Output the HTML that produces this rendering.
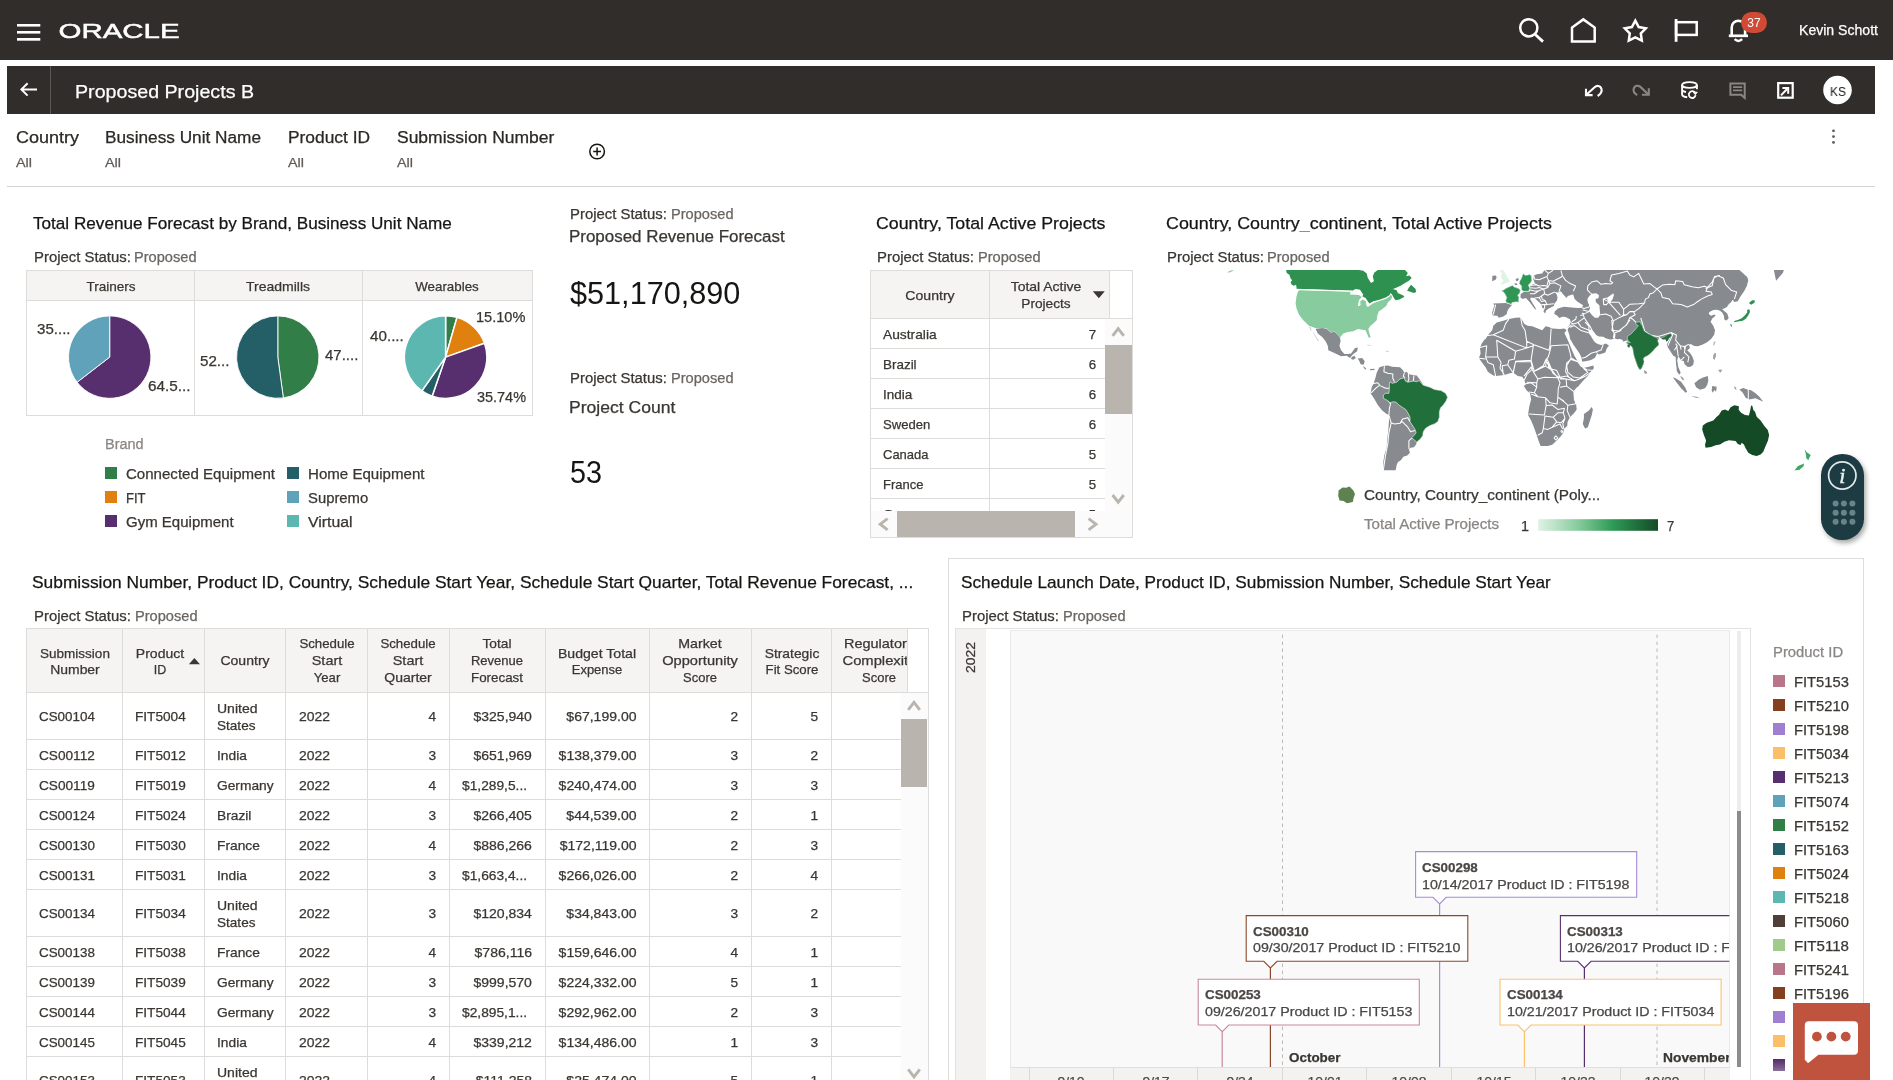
<!DOCTYPE html>
<html lang="en"><head><meta charset="utf-8"><title>Proposed Projects B</title>
<style>
html,body{margin:0;padding:0;background:#fff;}
body{width:1893px;height:1080px;overflow:hidden;position:relative;font-family:"Liberation Sans",sans-serif;}
.t{position:absolute;white-space:nowrap;-webkit-text-stroke:0.25px;}
#w{position:absolute;left:0;top:0;width:1893px;height:1080px;will-change:transform;}
.b{position:absolute;box-sizing:border-box;}
svg{position:absolute;left:0;top:0;overflow:visible;}
</style></head><body><div id="w">
<div class="b" style="left:0px;top:0px;width:1893px;height:59.5px;background:#312d2a;"></div>
<div class="b" style="left:7px;top:66px;width:1868px;height:47.7px;background:#312d2a;"></div>
<div class="b" style="left:50px;top:66px;width:1px;height:47.7px;background:#5b5754;"></div>
<svg width="1893" height="120" viewBox="0 0 1893 120" fill="none" stroke="#fff" stroke-width="2.5"><g stroke="none" fill="#fff"><rect x="17" y="24" width="23.3" height="2.6"/><rect x="17" y="31" width="23.3" height="2.6"/><rect x="17" y="38" width="23.3" height="2.7"/></g><text x="58.6" y="38" font-family="Liberation Sans, sans-serif" font-size="21" fill="#fff" stroke="#fff" stroke-width="0.5" textLength="121" lengthAdjust="spacingAndGlyphs">ORACLE</text><circle cx="1528.8" cy="27.8" r="8.6"/><path d="M1535 34.2 L1543 41.6" stroke-width="2.8"/><path d="M1572 41.6 V27.6 L1583.3 19.4 L1594.7 27.6 V41.6 Z" stroke-linejoin="miter"/><polygon points="1635.30,20.60 1638.71,27.01 1645.86,28.27 1640.82,33.49 1641.82,40.68 1635.30,37.50 1628.78,40.68 1629.78,33.49 1624.74,28.27 1631.89,27.01" stroke-linejoin="miter"/><path d="M1676.1 19 V41.8" stroke-width="2.8"/><rect x="1676.1" y="22.2" width="20.6" height="12.7"/><path d="M1728.8 35.8 H1748" stroke-width="2.7"/><path d="M1731.7 35.6 V27.4 a6.7 6.7 0 0 1 13.4 0 V35.6" stroke-width="2.6"/><path d="M1734.6 39.2 q3.8 3.4 7.6 0" stroke-width="2.4"/><rect x="1741" y="12" width="26" height="21" rx="10.5" fill="#d04a35" stroke="none"/><text x="1754" y="26.8" font-family="Liberation Sans, sans-serif" font-size="12" fill="#fff" stroke="none" text-anchor="middle">37</text><path d="M21.5 89.4 H37 M27.6 83.2 L21.4 89.4 L27.6 95.6" stroke-width="2"/><g stroke-width="2.1"><path d="M1586 88.8 V95.1 H1592.6"/><path d="M1586.3 94.8 L1594.6 87.2 C1597 85 1600.4 85.6 1601.4 88.6 C1602.2 91.4 1600.6 94.2 1597.6 96"/></g><g stroke-width="2.1" stroke="#8a8683"><path d="M1648.8 88.2 V94.8 H1642"/><path d="M1648.5 94.5 L1640.4 86.9 C1638 84.8 1634.8 85.6 1633.8 88.4 C1633 91 1634.4 93.6 1637.2 95"/></g><g stroke-width="1.9"><ellipse cx="1689.5" cy="85" rx="7.4" ry="2.9"/><path d="M1682.1 85 V94.6 C1682.1 96 1684.5 97 1687.2 97.3 M1696.9 85 V89.2 M1682.1 90 C1682.4 91 1684 91.7 1686 92"/><path d="M1695.6 95.2 a3.4 3.4 0 1 1 -0.6 -2.6" stroke-width="1.8"/><path d="M1693.2 92.2 h4.2 l-2.1 2.6 z" fill="#fff" stroke-width="0.8"/></g><g stroke="#8a8683" stroke-width="2"><path d="M1730.4 83.4 H1744.7 V98 L1741.2 94.7 H1730.4 Z" stroke-linejoin="miter"/><path d="M1733 87.2 H1742.2 M1733 90.4 H1742.2" stroke-width="1.8"/></g><g stroke-width="2.2"><rect x="1778.2" y="83.1" width="14.5" height="14.6"/><path d="M1781 95.4 L1787.3 88.8" stroke-width="2"/><path d="M1782.4 87.9 H1788.2 V93.8" fill="none" stroke-width="2"/></g><circle cx="1837.5" cy="90" r="14.3" fill="#fff" stroke="none"/></svg>
<div class="t" style="top:21.00px;font-size:14px;line-height:19px;color:#fff;left:1799.20px;transform-origin:0 0;transform:scaleX(1.0051);">Kevin Schott</div>
<div class="t" style="top:79.00px;font-size:19px;line-height:25px;color:#fff;left:75.40px;transform-origin:0 0;transform:scaleX(1.0335);">Proposed Projects B</div>
<div class="t" style="top:83.00px;font-size:13px;line-height:17px;color:#161513;left:1537.60px;width:600px;text-align:center;transform-origin:50% 0;transform:scaleX(0.9226);-webkit-text-stroke:0;">KS</div>
<div class="t" style="top:127.00px;font-size:16px;line-height:21px;color:#2b2825;left:15.70px;transform-origin:0 0;transform:scaleX(1.1246);">Country</div>
<div class="t" style="top:127.00px;font-size:16px;line-height:21px;color:#2b2825;left:105.10px;transform-origin:0 0;transform:scaleX(1.0763);">Business Unit Name</div>
<div class="t" style="top:127.00px;font-size:16px;line-height:21px;color:#2b2825;left:287.70px;transform-origin:0 0;transform:scaleX(1.0849);">Product ID</div>
<div class="t" style="top:127.00px;font-size:16px;line-height:21px;color:#2b2825;left:396.50px;transform-origin:0 0;transform:scaleX(1.0920);">Submission Number</div>
<div class="t" style="top:154.00px;font-size:13.7px;line-height:18px;color:#5f5a56;left:15.70px;transform-origin:0 0;transform:scaleX(1.0508);">All</div>
<div class="t" style="top:154.00px;font-size:13.7px;line-height:18px;color:#5f5a56;left:105.10px;transform-origin:0 0;transform:scaleX(1.0508);">All</div>
<div class="t" style="top:154.00px;font-size:13.7px;line-height:18px;color:#5f5a56;left:287.70px;transform-origin:0 0;transform:scaleX(1.0508);">All</div>
<div class="t" style="top:154.00px;font-size:13.7px;line-height:18px;color:#5f5a56;left:396.50px;transform-origin:0 0;transform:scaleX(1.0508);">All</div>
<svg width="1893" height="200" viewBox="0 0 1893 200" fill="none" stroke="#161513" stroke-width="1.5"><circle cx="597.1" cy="151.5" r="7.3"/><path d="M593.2 151.5 H601 M597.1 147.6 V155.4"/><g fill="#5f5a56" stroke="none"><circle cx="1833.5" cy="130.8" r="1.4"/><circle cx="1833.5" cy="136.6" r="1.4"/><circle cx="1833.5" cy="142.4" r="1.4"/></g></svg>
<div class="b" style="left:7px;top:186px;width:1868px;height:1px;background:#d6d2cf;"></div>
<div class="t" style="top:213.00px;font-size:16.6px;line-height:22px;color:#161513;left:33.30px;transform-origin:0 0;transform:scaleX(1.0322);clip-path:inset(0 0 3.4px 0);">Total Revenue Forecast by Brand, Business Unit Name</div>
<div class="t" style="top:248.00px;font-size:14px;line-height:19px;color:#3a3632;left:33.80px;transform-origin:0 0;transform:scaleX(1.0633);">Project Status:</div>
<div class="t" style="top:248.00px;font-size:14px;line-height:19px;color:#6b6661;left:134.10px;transform-origin:0 0;transform:scaleX(1.0429);">Proposed</div>
<div class="b" style="left:26px;top:270px;width:507px;height:146px;border:1px solid #dddcda;background:#fff;"></div>
<div class="b" style="left:27px;top:271px;width:505px;height:29.5px;background:#f5f4f2;"></div>
<div class="b" style="left:27px;top:300px;width:505px;height:1px;background:#dddcda;"></div>
<div class="b" style="left:194px;top:271px;width:1px;height:144px;background:#dddcda;"></div>
<div class="b" style="left:362px;top:271px;width:1px;height:144px;background:#dddcda;"></div>
<div class="t" style="top:278.00px;font-size:13px;line-height:17px;color:#3a3632;left:-189.40px;width:600px;text-align:center;transform-origin:50% 0;transform:scaleX(1.0425);">Trainers</div>
<div class="t" style="top:278.00px;font-size:13px;line-height:17px;color:#3a3632;left:-21.70px;width:600px;text-align:center;transform-origin:50% 0;transform:scaleX(1.0762);">Treadmills</div>
<div class="t" style="top:278.00px;font-size:13px;line-height:17px;color:#3a3632;left:146.60px;width:600px;text-align:center;transform-origin:50% 0;transform:scaleX(1.0259);">Wearables</div>
<svg width="1893" height="1080" viewBox="0 0 1893 1080" stroke="#fff" stroke-width="0.9" stroke-linejoin="round"><path d="M109.70 357.10 L109.70 315.90 A41.2 41.2 0 1 1 77.07 382.25 Z" fill="#582f6e"/><path d="M109.70 357.10 L77.07 382.25 A41.2 41.2 0 0 1 109.70 315.90 Z" fill="#5fa2ba"/><path d="M277.80 357.10 L277.80 315.90 A41.2 41.2 0 0 1 283.35 397.92 Z" fill="#317e49"/><path d="M277.80 357.10 L283.35 397.92 A41.2 41.2 0 1 1 277.80 315.90 Z" fill="#245e66"/><g stroke-width="1.5"><path d="M445.60 357.10 L445.60 315.80 A41.3 41.3 0 0 1 457.00 317.40 Z" fill="#317e49"/><path d="M445.60 357.10 L457.00 317.40 A41.3 41.3 0 0 1 484.50 343.23 Z" fill="#e0810f"/><path d="M445.60 357.10 L484.50 343.23 A41.3 41.3 0 0 1 432.12 396.14 Z" fill="#582f6e"/><path d="M445.60 357.10 L432.12 396.14 A41.3 41.3 0 0 1 421.87 390.90 Z" fill="#245e66"/><path d="M445.60 357.10 L421.87 390.90 A41.3 41.3 0 0 1 445.60 315.80 Z" fill="#5db7b1"/></g></svg>
<div class="t" style="top:320.00px;font-size:14px;line-height:19px;color:#3a3632;left:36.70px;transform-origin:0 0;transform:scaleX(1.0762);">35....</div>
<div class="t" style="top:377.00px;font-size:14px;line-height:19px;color:#3a3632;left:148.40px;transform-origin:0 0;transform:scaleX(1.0922);">64.5...</div>
<div class="t" style="top:352.00px;font-size:14px;line-height:19px;color:#3a3632;left:200.20px;transform-origin:0 0;transform:scaleX(1.0830);">52...</div>
<div class="t" style="top:346.00px;font-size:14px;line-height:19px;color:#3a3632;left:324.60px;transform-origin:0 0;transform:scaleX(1.0698);">47....</div>
<div class="t" style="top:327.00px;font-size:14px;line-height:19px;color:#3a3632;left:369.70px;transform-origin:0 0;transform:scaleX(1.0858);">40....</div>
<div class="t" style="top:308.00px;font-size:14px;line-height:19px;color:#3a3632;left:475.60px;transform-origin:0 0;transform:scaleX(1.0404);">15.10%</div>
<div class="t" style="top:388.00px;font-size:14px;line-height:19px;color:#3a3632;left:476.60px;transform-origin:0 0;transform:scaleX(1.0320);">35.74%</div>
<div class="t" style="top:435.00px;font-size:14px;line-height:19px;color:#8a8683;left:105.20px;transform-origin:0 0;transform:scaleX(1.0333);">Brand</div>
<div class="b" style="left:105.2px;top:467.2px;width:11.8px;height:11.8px;background:#317e49;"></div>
<div class="t" style="top:465.00px;font-size:14px;line-height:19px;color:#3a3632;left:125.60px;transform-origin:0 0;transform:scaleX(1.0756);">Connected Equipment</div>
<div class="b" style="left:105.2px;top:491.2px;width:11.8px;height:11.8px;background:#e0810f;"></div>
<div class="t" style="top:489.00px;font-size:14px;line-height:19px;color:#3a3632;left:125.60px;transform-origin:0 0;transform:scaleX(0.9337);">FIT</div>
<div class="b" style="left:105.2px;top:515.2px;width:11.8px;height:11.8px;background:#582f6e;"></div>
<div class="t" style="top:513.00px;font-size:14px;line-height:19px;color:#3a3632;left:125.60px;transform-origin:0 0;transform:scaleX(1.0721);">Gym Equipment</div>
<div class="b" style="left:287px;top:467.2px;width:11.8px;height:11.8px;background:#245e66;"></div>
<div class="t" style="top:465.00px;font-size:14px;line-height:19px;color:#3a3632;left:307.80px;transform-origin:0 0;transform:scaleX(1.0771);">Home Equipment</div>
<div class="b" style="left:287px;top:491.2px;width:11.8px;height:11.8px;background:#5fa2ba;"></div>
<div class="t" style="top:489.00px;font-size:14px;line-height:19px;color:#3a3632;left:307.80px;transform-origin:0 0;transform:scaleX(1.0598);">Supremo</div>
<div class="b" style="left:287px;top:515.2px;width:11.8px;height:11.8px;background:#5db7b1;"></div>
<div class="t" style="top:513.00px;font-size:14px;line-height:19px;color:#3a3632;left:307.80px;transform-origin:0 0;transform:scaleX(1.1312);">Virtual</div>
<div class="t" style="top:205.00px;font-size:14px;line-height:19px;color:#3a3632;left:570.30px;transform-origin:0 0;transform:scaleX(1.0633);">Project Status:</div>
<div class="t" style="top:205.00px;font-size:14px;line-height:19px;color:#6b6661;left:670.60px;transform-origin:0 0;transform:scaleX(1.0429);">Proposed</div>
<div class="t" style="top:226.00px;font-size:16px;line-height:21px;color:#3a3632;left:569.30px;transform-origin:0 0;transform:scaleX(1.0586);">Proposed Revenue Forecast</div>
<div class="t" style="top:273.00px;font-size:30.6px;line-height:40px;color:#161513;left:570.30px;transform-origin:0 0;transform:scaleX(1.0015);-webkit-text-stroke:0;">$51,170,890</div>
<div class="t" style="top:369.00px;font-size:14px;line-height:19px;color:#3a3632;left:570.30px;transform-origin:0 0;transform:scaleX(1.0633);">Project Status:</div>
<div class="t" style="top:369.00px;font-size:14px;line-height:19px;color:#6b6661;left:670.60px;transform-origin:0 0;transform:scaleX(1.0429);">Proposed</div>
<div class="t" style="top:397.00px;font-size:16px;line-height:21px;color:#3a3632;left:569.30px;transform-origin:0 0;transform:scaleX(1.0966);">Project Count</div>
<div class="t" style="top:452.00px;font-size:30.6px;line-height:40px;color:#161513;left:570.30px;transform-origin:0 0;transform:scaleX(0.9403);-webkit-text-stroke:0;">53</div>
<div class="t" style="top:213.00px;font-size:16.6px;line-height:22px;color:#161513;left:876.40px;transform-origin:0 0;transform:scaleX(1.0707);clip-path:inset(0 0 3.4px 0);">Country, Total Active Projects</div>
<div class="t" style="top:248.00px;font-size:14px;line-height:19px;color:#3a3632;left:877.30px;transform-origin:0 0;transform:scaleX(1.0633);">Project Status:</div>
<div class="t" style="top:248.00px;font-size:14px;line-height:19px;color:#6b6661;left:977.60px;transform-origin:0 0;transform:scaleX(1.0429);">Proposed</div>
<div class="b" style="left:870px;top:270px;width:263px;height:268px;border:1px solid #dddcda;background:#fff;"></div>
<div class="b" style="left:871px;top:271px;width:238.5px;height:47.5px;background:#f5f4f2;"></div>
<div class="b" style="left:871px;top:318px;width:261px;height:1px;background:#dddcda;"></div>
<div class="b" style="left:989px;top:271px;width:1px;height:241px;background:#dddcda;"></div>
<div class="b" style="left:1109px;top:271px;width:1px;height:47px;background:#dddcda;"></div>
<div class="b" style="left:1105px;top:319px;width:27px;height:192px;background:#fcfbfb;"></div>
<div class="b" style="left:871px;top:511px;width:261px;height:26px;background:#fcfbfb;"></div>
<div class="t" style="top:287.00px;font-size:13px;line-height:17px;color:#3a3632;left:629.60px;width:600px;text-align:center;transform-origin:50% 0;transform:scaleX(1.0831);">Country</div>
<div class="t" style="top:278.00px;font-size:13px;line-height:17px;color:#3a3632;left:745.60px;width:600px;text-align:center;transform-origin:50% 0;transform:scaleX(1.0722);">Total Active</div>
<div class="t" style="top:295.00px;font-size:13px;line-height:17px;color:#3a3632;left:745.50px;width:600px;text-align:center;transform-origin:50% 0;transform:scaleX(1.0520);">Projects</div>
<div class="t" style="top:326.00px;font-size:13px;line-height:17px;color:#3a3632;left:882.90px;transform-origin:0 0;transform:scaleX(1.0598);">Australia</div>
<div class="t" style="top:326.00px;font-size:13px;line-height:17px;color:#3a3632;right:797.00px;transform-origin:100% 0;transform:scaleX(1.0236);">7</div>
<div class="b" style="left:871px;top:348.0px;width:234px;height:1px;background:#dddcda;"></div>
<div class="t" style="top:356.00px;font-size:13px;line-height:17px;color:#3a3632;left:882.90px;transform-origin:0 0;transform:scaleX(1.0337);">Brazil</div>
<div class="t" style="top:356.00px;font-size:13px;line-height:17px;color:#3a3632;right:797.00px;transform-origin:100% 0;transform:scaleX(1.0236);">6</div>
<div class="b" style="left:871px;top:378.0px;width:234px;height:1px;background:#dddcda;"></div>
<div class="t" style="top:386.00px;font-size:13px;line-height:17px;color:#3a3632;left:882.90px;transform-origin:0 0;transform:scaleX(1.0395);">India</div>
<div class="t" style="top:386.00px;font-size:13px;line-height:17px;color:#3a3632;right:797.00px;transform-origin:100% 0;transform:scaleX(1.0236);">6</div>
<div class="b" style="left:871px;top:408.0px;width:234px;height:1px;background:#dddcda;"></div>
<div class="t" style="top:416.00px;font-size:13px;line-height:17px;color:#3a3632;left:882.90px;transform-origin:0 0;transform:scaleX(1.0069);">Sweden</div>
<div class="t" style="top:416.00px;font-size:13px;line-height:17px;color:#3a3632;right:797.00px;transform-origin:100% 0;transform:scaleX(1.0236);">6</div>
<div class="b" style="left:871px;top:438.0px;width:234px;height:1px;background:#dddcda;"></div>
<div class="t" style="top:446.00px;font-size:13px;line-height:17px;color:#3a3632;left:882.90px;transform-origin:0 0;transform:scaleX(0.9992);">Canada</div>
<div class="t" style="top:446.00px;font-size:13px;line-height:17px;color:#3a3632;right:797.00px;transform-origin:100% 0;transform:scaleX(1.0236);">5</div>
<div class="b" style="left:871px;top:468.0px;width:234px;height:1px;background:#dddcda;"></div>
<div class="t" style="top:476.00px;font-size:13px;line-height:17px;color:#3a3632;left:882.90px;transform-origin:0 0;transform:scaleX(0.9986);">France</div>
<div class="t" style="top:476.00px;font-size:13px;line-height:17px;color:#3a3632;right:797.00px;transform-origin:100% 0;transform:scaleX(1.0236);">5</div>
<div class="b" style="left:871px;top:498.0px;width:234px;height:1px;background:#dddcda;"></div>
<div class="b" style="left:871px;top:499px;width:234px;height:12px;overflow:hidden;"><div class="t" style="left:12px;top:6.9px;font-size:13px;line-height:17px;color:#3a3632;transform:scaleX(1.06);transform-origin:0 0;">Germany</div><div class="t" style="right:9px;top:6.9px;font-size:13px;line-height:17px;color:#3a3632;">5</div></div>
<div class="b" style="left:1105px;top:345px;width:26.5px;height:69px;background:#bab4af;"></div>
<div class="b" style="left:897px;top:511px;width:178px;height:26px;background:#bab4af;"></div>
<svg width="1893" height="1080" viewBox="0 0 1893 1080" fill="none" stroke="#bab4af" stroke-width="2.9"><path d="M1112.6 335.8 L1118.2 328.6 L1123.8 335.8"/><path d="M1112.6 495 L1118.2 502.2 L1123.8 495"/><path d="M887.6 518.6 L880.2 524.2 L887.6 529.8"/><path d="M1088.6 518.6 L1096 524.2 L1088.6 529.8"/><path d="M1092.8 291.3 h12 l-6 7 z" fill="#3a3632" stroke="none"/></svg>
<div class="t" style="top:213.00px;font-size:16.6px;line-height:22px;color:#161513;left:1165.70px;transform-origin:0 0;transform:scaleX(1.0773);clip-path:inset(0 0 3.4px 0);">Country, Country_continent, Total Active Projects</div>
<div class="t" style="top:248.00px;font-size:14px;line-height:19px;color:#3a3632;left:1166.60px;transform-origin:0 0;transform:scaleX(1.0633);">Project Status:</div>
<div class="t" style="top:248.00px;font-size:14px;line-height:19px;color:#6b6661;left:1266.90px;transform-origin:0 0;transform:scaleX(1.0429);">Proposed</div>
<svg width="1893" height="1080" viewBox="0 0 1893 1080"><defs><clipPath id="mapclip"><rect x="1160" y="270" width="700" height="200.6"/></clipPath></defs><g clip-path="url(#mapclip)"><path d="M1286.1 270.0 L1358.9 270.0 L1363.3 270.8 L1366.7 273.6 L1367.8 278.0 L1371.1 283.0 L1373.9 281.3 L1372.8 276.3 L1374.4 272.4 L1377.8 270.0 L1405.0 270.0 L1407.8 273.0 L1406.1 276.3 L1409.4 275.6 L1411.7 278.0 L1408.9 280.8 L1405.0 283.0 L1400.6 285.8 L1395.6 288.0 L1392.8 289.1 L1396.7 290.2 L1397.8 293.0 L1403.3 295.6 L1404.4 296.7 L1399.4 299.4 L1395.6 300.2 L1393.9 298.0 L1392.2 294.7 L1390.6 293.0 L1389.4 295.2 L1385.6 297.4 L1379.4 299.7 L1373.3 301.3 L1369.4 303.6 L1368.3 301.9 L1365.6 298.0 L1362.2 296.3 L1363.3 294.7 L1360.0 289.7 L1355.6 289.1 L1352.2 290.8 L1296.7 288.9 L1296.1 284.7 L1293.9 285.8 L1291.7 284.7 L1290.6 281.9 L1292.2 280.2 L1290.6 278.6 L1289.4 274.7 L1286.7 273.0Z" fill="#2e9150" /><path d="M1411.1 284.7 L1415.6 289.1 L1416.1 291.9 L1413.9 293.0 L1407.2 290.8 L1408.9 287.4Z" fill="#2e9150" /><path d="M1299.1 290.2 L1350.6 291.7 L1350.0 294.4 L1354.4 294.7 L1358.9 294.9 L1361.7 297.1 L1358.9 300.2 L1357.8 306.3 L1360.6 305.2 L1360.2 301.3 L1362.8 299.4 L1365.8 301.3 L1366.4 305.2 L1367.8 307.1 L1373.3 303.3 L1379.4 301.1 L1385.6 299.1 L1389.4 296.7 L1390.9 294.4 L1392.2 297.1 L1390.6 300.0 L1387.8 302.4 L1386.4 305.8 L1382.4 308.9 L1378.7 311.6 L1377.3 315.8 L1376.7 320.2 L1373.3 323.6 L1370.0 326.3 L1368.3 329.1 L1369.4 333.6 L1370.6 336.9 L1368.9 338.0 L1366.9 333.6 L1365.6 330.2 L1362.2 329.7 L1357.8 329.1 L1353.3 331.3 L1347.8 331.9 L1343.3 333.6 L1340.0 337.4 L1336.7 333.6 L1333.9 331.3 L1331.1 332.4 L1326.7 328.6 L1322.2 328.0 L1316.7 328.6 L1308.9 325.8 L1303.3 320.2 L1299.1 314.7 L1296.7 309.1 L1295.6 303.6 L1296.4 296.9 L1297.8 291.9Z" fill="#88cb9e" /><path d="M1227.0 272.3 L1231.5 270.2 L1234.0 270.4 L1229.5 272.6Z" fill="#88cb9e" /><path d="M1315.6 329.1 L1322.2 328.0 L1326.7 328.9 L1331.1 332.7 L1333.9 331.6 L1336.7 333.8 L1340.0 337.8 L1340.6 341.3 L1339.4 345.8 L1341.1 350.2 L1344.4 354.1 L1347.8 354.1 L1351.1 353.6 L1355.0 348.0 L1357.8 347.4 L1357.2 351.3 L1353.9 353.6 L1351.7 355.8 L1350.0 358.0 L1346.7 355.8 L1341.1 356.3 L1334.4 353.0 L1328.3 350.2 L1327.8 345.8 L1325.6 341.3 L1322.2 336.9 L1317.8 333.6Z" fill="#878b90" /><path d="M1351.7 356.9 L1354.4 355.8 L1355.8 358.0 L1353.3 359.8 L1351.1 359.1Z" fill="#878b90" /><path d="M1357.8 358.6 L1362.2 358.0 L1364.7 361.3 L1363.6 364.7 L1360.6 364.2 L1359.4 361.3Z" fill="#878b90" /><path d="M1363.1 365.8 L1366.2 368.4 L1365.6 369.7 L1363.9 368.0Z" fill="#878b90" /><path d="M1370.0 369.1 L1374.4 368.7 L1374.7 370.0 L1370.2 370.3Z" fill="#878b90" /><path d="M1309.1 326.7 L1310.6 326.9 L1311.7 330.2 L1310.9 330.8Z" fill="#c9cbcd" /><path d="M1312.8 332.4 L1313.9 333.0 L1318.9 340.8 L1317.8 341.3Z" fill="#d5d7d9" /><path d="M1366.7 344.7 L1371.1 344.9 L1371.7 345.8 L1367.8 345.8Z" fill="#d5d7d9" /><path d="M1385.6 350.8 L1388.9 350.8 L1388.7 351.9 L1386.1 351.9Z" fill="#d5d7d9" /><path d="M1377.2 371.7 L1379.4 367.2 L1383.3 365.9 L1387.8 365.6 L1392.2 366.7 L1400.0 367.2 L1402.8 370.0 L1404.4 372.8 L1406.7 371.7 L1408.3 373.9 L1412.2 375.0 L1416.7 375.6 L1419.4 378.9 L1421.7 382.2 L1423.3 385.0 L1430.0 387.2 L1434.4 389.4 L1441.1 390.6 L1445.6 393.3 L1447.6 397.2 L1446.1 401.1 L1443.3 405.0 L1440.6 407.8 L1439.4 411.7 L1439.4 417.2 L1437.8 421.7 L1434.4 423.9 L1430.0 425.6 L1425.6 428.3 L1423.3 431.7 L1422.8 435.6 L1420.0 439.4 L1416.7 442.2 L1416.1 444.4 L1413.9 447.2 L1410.6 447.8 L1408.9 449.4 L1410.0 452.8 L1407.2 455.6 L1403.3 456.7 L1401.1 460.0 L1397.8 462.2 L1396.7 465.0 L1395.6 470.6 L1383.3 470.6 L1383.3 461.7 L1384.4 455.0 L1386.7 447.2 L1387.2 439.4 L1388.3 430.6 L1388.9 421.7 L1389.1 415.0 L1386.7 413.9 L1382.2 410.6 L1377.8 405.0 L1373.9 398.3 L1370.6 393.3 L1371.7 387.2 L1373.9 382.8 L1375.6 377.2 L1376.7 372.8Z" fill="#878b90" /><path d="M1493.3 325.8 L1496.7 322.4 L1503.3 320.8 L1508.9 319.1 L1515.6 317.8 L1520.6 317.4 L1522.2 320.2 L1524.4 324.1 L1527.8 325.8 L1532.2 326.3 L1537.8 328.6 L1542.2 330.2 L1545.6 326.3 L1548.9 326.9 L1552.2 328.6 L1560.0 329.1 L1564.4 328.6 L1566.7 330.2 L1564.4 333.0 L1568.3 341.3 L1571.1 348.0 L1574.4 355.8 L1577.8 361.3 L1581.1 365.8 L1583.3 368.0 L1587.8 366.9 L1593.3 365.6 L1593.9 368.0 L1591.1 371.7 L1587.8 376.1 L1583.3 380.6 L1579.4 385.0 L1576.7 388.3 L1573.9 392.8 L1574.4 399.4 L1576.1 403.9 L1576.7 409.4 L1574.4 412.8 L1570.0 417.2 L1567.6 421.7 L1567.2 426.1 L1563.9 428.9 L1563.3 432.8 L1561.1 436.1 L1556.7 440.6 L1552.2 444.8 L1547.8 446.1 L1540.6 446.1 L1538.9 441.7 L1536.7 435.0 L1533.9 427.2 L1531.1 420.6 L1528.3 415.6 L1528.3 412.8 L1529.4 406.1 L1531.1 399.4 L1530.0 393.3 L1526.7 390.6 L1523.9 386.1 L1525.6 384.4 L1524.4 380.0 L1522.2 376.7 L1517.8 376.1 L1513.3 372.8 L1510.0 373.3 L1504.4 375.0 L1495.6 376.1 L1493.3 375.6 L1487.8 371.7 L1485.6 367.2 L1482.2 362.8 L1478.9 358.3 L1480.6 353.6 L1480.0 348.0 L1481.7 343.6 L1485.0 339.1 L1488.3 334.7 L1492.2 330.2Z" fill="#878b90" /><path d="M1591.7 407.0 L1592.9 409.4 L1591.8 415.0 L1589.6 421.7 L1587.8 427.2 L1585.0 428.6 L1582.8 423.9 L1583.9 418.3 L1583.9 413.9 L1588.9 410.6Z" fill="#878b90" /><path d="M1499.8 270.3 L1503.3 270.2 L1504.9 272.7 L1506.8 276.6 L1509.2 279.7 L1509.9 281.2 L1507.2 282.8 L1502.6 284.3 L1499.8 284.3 L1502.2 282.4 L1503.3 280.4 L1501.4 278.1 L1501.0 275.8 L1502.2 273.4 L1500.4 271.9Z" fill="#dff3e5" /><path d="M1492.4 275.8 L1495.6 275.4 L1496.7 277.3 L1495.6 279.7 L1492.1 281.2Z" fill="#878b90" /><path d="M1515.4 279.7 L1517.3 278.1 L1518.9 278.9 L1518.1 280.8 L1516.6 281.2Z" fill="#878b90" /><path d="M1514.2 283.6 L1516.6 283.2 L1517.5 284.7 L1515.4 285.3Z" fill="#878b90" /><path d="M1493.2 303.4 L1505.7 303.0 L1511.9 304.9 L1511.1 306.1 L1508.8 308.4 L1507.2 311.6 L1506.8 313.9 L1503.3 316.6 L1498.7 317.8 L1497.5 315.8 L1492.8 315.4 L1492.1 312.7 L1493.6 307.7 L1494.4 305.3Z" fill="#878b90" /><path d="M1544.6 269.9 L1542.2 273.4 L1536.8 274.2 L1533.7 275.4 L1533.3 280.4 L1534.4 283.6 L1530.6 285.5 L1529.8 287.8 L1530.9 290.2 L1529.0 291.7 L1523.6 292.1 L1520.8 294.1 L1520.4 297.2 L1522.4 299.1 L1525.9 297.9 L1529.8 302.2 L1534.4 308.4 L1536.2 310.0 L1535.4 307.7 L1532.5 303.0 L1530.2 299.1 L1530.9 297.6 L1534.4 297.9 L1537.6 300.7 L1541.4 304.6 L1542.2 307.7 L1544.6 308.8 L1543.4 311.6 L1545.2 313.5 L1546.1 310.4 L1548.8 308.4 L1553.9 306.1 L1554.7 303.4 L1557.0 300.7 L1557.8 297.6 L1556.6 294.1 L1554.7 292.1 L1558.6 292.9 L1560.9 291.3 L1562.4 293.7 L1565.6 296.0 L1566.3 297.6 L1567.9 296.0 L1572.6 294.4 L1573.3 291.3 L1581.1 269.9Z" fill="#878b90" /><path d="M1523.2 273.4 L1525.1 275.4 L1529.8 274.6 L1531.3 275.8 L1531.7 280.4 L1530.6 282.8 L1528.2 285.1 L1529.8 288.2 L1528.6 291.3 L1523.6 291.3 L1521.6 289.8 L1521.6 285.9 L1519.3 283.6 L1519.7 281.2 L1521.2 278.9 L1522.4 275.8Z" fill="#2f9654" /><path d="M1501.0 290.6 L1503.3 290.2 L1505.7 288.6 L1511.1 285.9 L1512.7 285.5 L1514.2 287.1 L1518.9 288.6 L1520.4 290.6 L1519.7 292.9 L1517.7 295.2 L1518.9 297.6 L1518.5 299.9 L1518.9 302.2 L1516.6 301.8 L1511.9 302.6 L1511.5 304.2 L1506.4 302.6 L1505.7 300.7 L1506.8 297.6 L1504.9 293.7 L1503.3 291.7Z" fill="#2f9654" /><path d="M1573.3 269.9 L1739.4 270.0 L1743.3 273.6 L1747.2 276.9 L1748.3 280.2 L1746.9 285.8 L1744.4 290.8 L1740.6 296.3 L1737.8 301.3 L1734.4 301.9 L1732.8 299.7 L1730.0 303.6 L1727.8 306.3 L1724.4 308.6 L1722.2 309.1 L1723.9 310.8 L1727.2 313.6 L1728.7 318.0 L1726.7 320.4 L1724.4 319.7 L1723.9 315.8 L1722.2 312.4 L1720.0 310.8 L1716.7 309.7 L1713.3 310.0 L1709.4 311.9 L1708.7 314.1 L1711.1 315.8 L1714.4 314.4 L1715.6 315.8 L1712.2 318.6 L1710.6 321.9 L1713.3 325.8 L1715.0 330.2 L1714.2 334.7 L1711.1 339.1 L1706.7 342.4 L1702.2 344.7 L1697.8 346.3 L1694.4 346.0 L1690.6 344.1 L1688.9 344.7 L1690.0 348.0 L1687.2 350.2 L1690.0 353.0 L1692.2 356.3 L1693.9 360.8 L1693.3 364.7 L1690.6 366.7 L1687.8 367.1 L1684.4 364.1 L1683.9 361.3 L1681.1 360.2 L1678.3 356.3 L1677.2 360.2 L1678.3 366.9 L1680.6 372.4 L1679.4 374.7 L1677.2 371.3 L1676.1 364.7 L1675.6 356.9 L1673.3 355.8 L1671.1 352.4 L1668.3 348.0 L1666.7 344.7 L1669.1 340.2 L1670.0 338.0 L1671.4 335.7 L1669.1 338.0 L1667.6 340.7 L1666.4 341.5 L1661.3 341.1 L1658.3 338.9 L1657.8 341.1 L1658.9 343.9 L1658.3 345.6 L1655.6 347.8 L1653.3 350.6 L1650.6 353.3 L1647.8 355.6 L1644.4 357.2 L1643.3 358.9 L1644.2 361.7 L1643.3 364.4 L1642.2 367.2 L1640.8 369.4 L1639.2 369.2 L1637.5 366.1 L1636.1 362.2 L1635.0 358.9 L1633.9 355.6 L1633.1 351.1 L1632.5 347.8 L1631.1 346.1 L1630.0 345.6 L1629.7 347.5 L1628.1 347.5 L1627.2 345.6 L1628.3 343.9 L1626.1 343.1 L1626.4 342.2 L1628.3 341.1 L1626.7 340.6 L1625.0 341.1 L1623.6 341.7 L1622.2 339.7 L1620.0 338.9 L1617.2 339.2 L1614.4 338.3 L1611.7 339.4 L1608.9 339.2 L1605.6 338.3 L1603.3 336.7 L1598.9 336.4 L1596.1 335.0 L1594.4 332.8 L1592.2 330.6 L1588.9 329.4 L1588.3 332.8 L1590.6 335.6 L1592.2 338.3 L1593.9 341.1 L1595.6 342.8 L1597.8 343.9 L1601.1 345.0 L1603.3 344.4 L1605.6 343.6 L1608.3 345.0 L1608.9 345.7 L1607.2 347.8 L1606.1 350.0 L1605.6 352.2 L1603.3 353.3 L1598.9 354.4 L1597.2 353.3 L1596.1 355.6 L1595.0 357.8 L1591.1 360.0 L1586.7 361.1 L1582.2 361.7 L1581.7 358.9 L1581.1 356.7 L1579.4 353.3 L1577.8 351.1 L1575.6 347.8 L1573.3 344.4 L1571.1 340.6 L1570.0 338.9 L1569.6 335.7 L1568.0 331.0 L1567.2 328.3 L1569.6 324.8 L1570.7 321.7 L1569.9 319.3 L1565.6 317.0 L1562.4 316.8 L1559.3 317.9 L1557.0 315.6 L1554.3 313.9 L1554.7 311.6 L1555.8 310.4Z" fill="#878b90" /><path d="M1644.2 370.0 L1646.4 371.7 L1646.9 373.4 L1644.7 373.7Z" fill="#878b90" /><path d="M1773.9 270.0 L1783.9 270.0 L1782.8 273.0 L1778.9 277.4 L1776.1 280.8 L1775.0 275.8Z" fill="#878b90" /><path d="M1554.7 292.1 L1556.6 294.1 L1557.8 297.6 L1557.0 300.7 L1554.7 303.4 L1554.3 306.9 L1555.8 310.4 L1557.8 308.4 L1564.0 306.7 L1571.8 307.5 L1578.0 308.1 L1581.9 307.7 L1583.1 305.3 L1580.3 303.4 L1577.2 301.4 L1574.5 298.7 L1573.3 294.8 L1572.6 294.4 L1567.9 296.0 L1566.3 297.9 L1564.8 296.0 L1562.4 293.7 L1560.9 291.7 L1558.6 292.9Z" fill="#fff" /><path d="M1591.7 293.7 L1596.3 293.3 L1599.1 295.2 L1598.3 298.3 L1595.6 299.1 L1595.9 302.2 L1599.4 305.3 L1599.8 310.0 L1600.2 314.7 L1598.3 317.8 L1594.8 317.8 L1591.7 314.7 L1589.3 311.6 L1590.1 306.9 L1587.8 302.2 L1587.4 299.1 L1589.3 296.0Z" fill="#fff" /><path d="M1606.8 297.9 L1613.4 293.3 L1613.8 295.2 L1612.7 299.1 L1610.3 302.2 L1608.0 301.4Z" fill="#fff" /><path d="M1658.6 336.8 L1660.9 338.0 L1662.4 339.2 L1665.6 339.2 L1666.3 341.9 L1665.6 345.0 L1660.9 344.6 L1658.9 342.7 L1659.3 339.6Z" fill="#fff" /><path d="M1635.6 322.2 L1640.6 321.9 L1641.1 324.4 L1642.2 325.6 L1643.3 328.3 L1644.4 331.1 L1647.8 333.3 L1652.2 335.6 L1656.7 337.8 L1658.3 338.9 L1657.8 341.1 L1658.9 343.9 L1658.3 345.6 L1655.6 347.8 L1653.3 350.6 L1650.6 353.3 L1647.8 355.6 L1644.4 357.2 L1643.3 358.9 L1644.2 361.7 L1643.3 364.4 L1642.2 367.2 L1640.8 369.4 L1639.2 369.2 L1637.5 366.1 L1636.1 362.2 L1635.0 358.9 L1633.9 355.6 L1633.1 351.1 L1632.5 347.8 L1631.1 346.1 L1630.0 345.6 L1629.7 347.5 L1628.1 347.5 L1627.2 345.6 L1628.3 343.9 L1626.1 343.1 L1626.4 342.2 L1630.3 342.5 L1628.3 341.1 L1627.2 338.3 L1627.8 336.1 L1631.1 333.9 L1633.9 331.1 L1636.7 327.8 L1638.3 325.6 L1636.1 324.4Z" fill="#21703c" /><path d="M1661.3 338.4 L1664.4 337.6 L1667.6 334.9 L1670.7 334.1 L1671.4 335.7 L1669.1 338.0 L1667.6 340.7 L1666.4 341.5 L1665.6 339.2 L1662.9 339.6Z" fill="#21703c" /><path d="M1748.9 303.0 L1752.2 300.2 L1755.0 300.4 L1754.4 302.7 L1751.1 304.7Z" fill="#2e9150" /><path d="M1747.2 309.7 L1749.4 309.3 L1750.0 311.9 L1748.3 315.2 L1746.1 318.6 L1742.8 320.8 L1737.8 321.6 L1734.4 322.2 L1734.2 321.1 L1737.8 320.0 L1741.7 318.2 L1745.0 315.2 L1747.2 312.4Z" fill="#2e9150" /><path d="M1730.2 324.4 L1731.3 324.1 L1732.0 326.3 L1731.1 326.7Z" fill="#2e9150" /><path d="M1672.8 377.2 L1675.6 378.3 L1681.1 381.7 L1685.0 387.2 L1687.2 391.7 L1685.6 392.8 L1681.1 388.3 L1677.2 383.3Z" fill="#878b90" /><path d="M1694.4 383.3 L1698.9 379.4 L1703.9 377.2 L1707.8 376.1 L1708.3 380.6 L1707.2 385.0 L1705.0 388.3 L1700.0 389.7 L1696.1 387.2Z" fill="#878b90" /><path d="M1712.2 386.1 L1716.7 386.7 L1716.1 391.7 L1714.4 390.0 L1712.8 392.8 L1711.7 390.6Z" fill="#878b90" /><path d="M1739.4 389.4 L1743.3 388.1 L1747.2 389.4 L1751.1 390.3 L1755.6 393.3 L1759.4 396.7 L1763.3 401.7 L1760.0 400.3 L1755.6 398.3 L1749.4 399.4 L1745.6 397.8 L1742.8 392.8Z" fill="#878b90" /><path d="M1691.1 395.9 L1696.7 396.7 L1700.0 398.3 L1695.6 397.8Z" fill="#9da0a4" /><path d="M1676.7 368.3 L1678.3 371.7 L1680.6 373.7 L1678.9 373.9 L1676.7 371.1Z" fill="#878b90" /><path d="M1680.0 376.1 L1682.8 377.2 L1684.4 380.6 L1682.2 379.7Z" fill="#9da0a4" /><path d="M1644.2 370.6 L1646.4 371.7 L1646.9 373.3 L1645.0 373.0Z" fill="#9da0a4" /><path d="M1718.3 370.0 L1722.2 369.7 L1720.6 372.6Z" fill="#9da0a4" /><path d="M1733.9 386.1 L1735.6 387.2 L1736.7 390.0 L1734.7 388.9Z" fill="#9da0a4" /><path d="M1713.3 355.0 L1716.1 355.0 L1714.7 359.4 L1713.3 358.3Z" fill="#9da0a4" /><path d="M1713.9 341.3 L1715.6 341.9 L1713.9 345.8 L1713.1 344.7Z" fill="#b5b8bb" /><path d="M1713.9 353.6 L1716.1 353.0 L1714.7 359.7 L1713.3 359.1Z" fill="#9da0a4" /><path d="M1718.3 369.7 L1722.0 369.7 L1720.2 372.7Z" fill="#9da0a4" /><path d="M1734.4 405.2 L1738.9 406.3 L1738.7 409.7 L1741.1 412.8 L1745.0 415.0 L1748.9 415.6 L1750.2 410.6 L1751.1 405.6 L1752.4 406.1 L1753.3 410.0 L1755.0 411.7 L1756.7 416.7 L1760.6 420.6 L1764.4 426.1 L1767.8 430.0 L1769.1 435.0 L1768.0 440.6 L1765.6 446.1 L1763.3 451.7 L1760.6 454.4 L1756.7 455.9 L1752.2 455.0 L1748.3 452.8 L1745.6 448.3 L1743.9 444.4 L1741.7 442.8 L1740.6 445.0 L1737.8 443.9 L1735.6 441.1 L1728.9 440.3 L1724.4 441.7 L1720.0 444.4 L1715.6 445.2 L1711.1 447.0 L1705.6 447.8 L1705.0 445.0 L1706.1 440.6 L1703.9 435.0 L1702.2 429.4 L1702.8 425.6 L1706.7 422.8 L1713.3 420.6 L1716.7 416.7 L1718.9 415.0 L1721.7 410.6 L1725.0 409.4 L1728.3 411.1 L1730.6 407.2Z" fill="#144a26" /><path d="M1804.7 449.3 L1806.5 452.0 L1810.7 454.9 L1809.2 458.0 L1808.3 460.3 L1806.3 458.3 L1806.0 455.0Z" fill="#40a661" /><path d="M1794.2 470.8 L1798.0 466.1 L1804.0 463.4 L1803.6 466.2 L1799.5 469.7Z" fill="#40a661" /><path d="M1384.4 366.1 L1383.9 371.7 L1387.8 373.3 L1392.8 373.9 L1392.8 378.3 L1394.4 381.7 M1404.4 372.8 L1403.3 376.1 L1405.0 377.8 M1408.3 373.9 L1408.9 378.9 L1407.8 382.2 M1413.9 375.6 L1413.3 381.1 M1371.1 384.1 L1377.8 382.8 L1380.0 385.6 L1385.6 388.3 L1389.4 388.3 M1371.1 392.8 L1375.6 388.3 L1379.1 385.6 M1388.3 400.6 L1390.6 403.9 L1389.4 408.3 L1388.9 415.0 M1389.1 415.6 L1391.1 422.8 L1394.4 423.9 L1400.0 423.3 L1402.8 418.9 L1407.8 417.8 L1410.0 421.7 M1400.0 423.3 L1402.2 421.7 L1407.8 427.2 L1410.6 431.7 L1415.0 430.6 M1391.1 423.3 L1388.9 432.8 L1387.8 443.9 L1385.6 455.0 L1383.9 466.1 L1383.3 470.6 M1411.7 438.3 L1408.9 440.6 L1408.9 448.9 M1493.3 334.7 L1503.3 330.2 L1505.6 323.6 L1508.9 319.1 M1493.3 334.7 L1486.7 335.8 L1485.0 339.1 M1493.3 334.7 L1526.7 348.0 L1515.6 351.3 L1496.7 340.2 L1497.8 356.9 L1485.6 356.9 L1486.7 345.8 L1480.0 347.4 M1520.6 317.4 L1522.2 325.8 L1525.0 330.2 L1526.7 341.3 L1533.9 344.7 L1548.9 350.2 L1550.0 345.8 L1551.1 328.6 M1526.7 341.3 L1526.7 348.0 M1526.7 348.0 L1533.3 345.8 L1533.9 344.7 M1551.1 345.8 L1567.8 344.7 M1551.1 345.8 L1550.0 350.8 L1548.3 356.9 L1545.6 360.2 L1548.9 365.8 L1553.3 373.6 L1560.0 378.0 L1566.7 379.1 M1567.8 344.7 L1570.0 352.4 L1571.1 358.0 L1575.0 360.2 L1577.8 361.3 M1571.1 358.0 L1566.7 365.8 L1567.8 372.4 L1573.3 376.9 L1580.0 378.0 L1587.8 372.4 L1583.3 368.0 M1533.3 345.8 L1531.1 360.2 L1533.3 368.0 L1534.4 371.3 L1543.3 365.8 L1545.6 360.2 M1515.6 351.3 L1514.4 359.1 L1508.9 360.2 L1507.8 364.7 L1513.3 373.0 M1531.1 360.2 L1515.6 361.3 L1513.3 373.0 M1533.3 368.0 L1526.7 374.7 L1524.4 380.0 M1497.8 356.9 L1501.1 362.4 L1500.0 368.0 L1504.4 375.0 M1507.8 364.7 L1502.2 365.8 L1503.3 374.7 M1485.6 356.9 L1487.8 362.4 L1493.3 364.7 L1495.6 376.1 M1478.9 358.3 L1485.6 359.1 M1533.3 368.0 L1526.7 374.7 L1524.4 380.0 M1523.9 376.1 L1531.1 367.2 L1533.3 371.7 L1537.8 378.9 L1536.7 382.8 L1526.7 382.2 M1533.3 371.7 L1545.6 366.1 L1552.2 370.6 L1557.8 377.8 M1513.3 371.7 L1515.6 361.7 L1531.1 361.7 L1532.2 367.2 L1531.1 367.2 M1537.8 378.9 L1544.4 377.2 L1557.8 377.8 L1560.0 382.8 L1558.3 388.3 L1557.8 397.2 L1557.2 403.9 L1550.0 402.8 L1545.6 397.8 L1537.8 396.7 L1534.4 392.8 L1536.7 387.2 L1536.7 382.8 M1524.4 384.1 L1531.1 382.8 L1536.7 387.2 M1534.4 392.8 L1528.9 391.9 M1531.1 393.9 L1537.8 396.7 M1545.6 397.8 L1546.1 405.6 L1544.4 415.0 L1528.9 414.1 M1546.1 405.6 L1552.2 405.0 L1557.8 409.4 L1564.4 408.3 L1563.3 412.8 L1557.8 412.8 L1553.3 417.2 L1545.0 415.9 M1560.0 378.9 L1566.1 378.9 L1566.7 386.1 L1560.0 387.2 M1566.1 378.9 L1574.4 380.8 L1579.4 378.9 M1566.7 386.1 L1573.9 391.7 L1577.8 387.2 M1573.9 391.7 L1574.4 399.4 L1576.1 403.7 L1567.8 405.2 L1564.4 402.2 L1558.9 397.8 M1557.8 397.2 L1560.6 398.9 L1563.3 400.6 L1564.4 402.2 M1567.8 405.2 L1567.2 410.6 L1570.0 417.2 M1563.3 412.8 L1565.0 418.3 L1561.1 422.8 L1556.7 421.9 L1553.3 417.2 M1565.0 418.3 L1562.8 423.9 L1563.9 428.9 M1556.7 421.9 L1552.2 427.2 L1547.8 429.4 L1543.3 428.6 L1545.0 415.9 M1543.3 428.6 L1542.2 432.8 L1537.8 435.2 M1552.2 427.2 L1560.0 424.1 L1562.8 428.9 M1553.9 437.8 L1555.8 435.9 L1557.8 437.8 L1555.8 440.0 L1553.9 437.8 M1560.6 431.7 L1561.7 430.3 L1562.8 431.9 L1561.3 433.0 M1566.7 362.8 L1571.1 359.4 L1577.8 361.7 L1581.1 366.1 L1586.7 369.7 L1593.3 370.6 L1585.6 376.1 L1579.4 378.9 L1574.4 380.8 L1568.9 377.2 L1565.6 371.7 L1566.7 362.8 M1586.7 369.7 L1583.3 368.3 M1546.7 358.3 L1552.2 370.6 M1557.8 377.8 L1560.0 377.2 L1566.7 376.1 L1568.9 377.2 M1545.6 366.1 L1546.7 358.3 M1560.0 377.2 L1556.7 370.6 L1548.9 368.3 L1547.8 361.7 M1587.8 285.9 L1591.7 282.0 L1597.1 280.8 L1601.0 284.3 L1605.7 283.6 L1611.1 283.9 L1612.7 282.8 L1609.9 280.8 L1611.5 275.0 L1618.9 273.4 L1627.4 271.1 L1629.8 275.0 L1633.7 276.9 L1638.7 273.4 L1643.8 283.9 L1650.0 283.6 L1654.7 287.4 L1657.0 289.0 M1657.0 289.0 L1653.1 292.9 L1650.0 293.7 L1648.4 297.6 L1645.3 299.1 L1644.6 303.0 L1639.1 303.8 L1629.8 304.2 L1626.7 306.9 L1623.6 309.2 M1587.8 285.9 L1587.4 289.8 L1590.1 292.9 L1591.7 293.7 M1606.8 297.9 L1603.3 299.1 L1603.7 304.6 L1606.4 304.6 L1608.8 302.2 L1613.4 302.2 L1618.9 302.2 L1622.0 306.9 L1623.6 309.2 L1623.6 314.7 L1622.0 316.2 M1657.0 289.0 L1662.4 285.1 L1669.4 284.3 L1674.9 284.7 L1675.7 280.8 L1682.7 281.6 L1684.2 284.7 L1692.0 286.7 L1698.2 287.8 L1704.4 286.3 L1707.6 287.4 L1706.0 291.3 L1711.4 292.1 L1712.2 294.4 L1707.6 296.0 L1701.3 299.1 L1696.7 302.2 L1693.6 304.6 L1687.3 306.9 L1681.1 304.6 L1672.6 303.8 L1669.4 299.1 L1662.4 297.6 L1660.9 292.9 L1657.0 289.0 M1707.6 287.4 L1712.2 282.0 L1714.6 276.6 L1720.0 275.4 M1600.2 314.7 L1605.7 313.9 L1611.1 316.2 L1613.4 320.9 L1617.3 318.6 L1622.0 316.2 L1626.7 314.7 L1629.8 311.6 L1634.4 311.6 L1639.1 308.4 L1644.6 303.0 M1603.3 299.1 L1608.0 301.4 L1614.2 308.4 L1620.4 315.4 M1613.4 320.9 L1611.9 330.2 L1614.2 332.6 L1613.4 338.0 M1611.9 330.2 L1618.9 331.0 L1623.6 327.1 L1626.7 324.8 L1629.8 317.8 L1635.2 314.7 L1633.7 312.3 M1629.8 317.8 L1632.9 319.3 L1636.0 322.4 M1623.6 314.7 L1626.7 314.7 M1640.7 317.8 L1642.2 322.4 L1644.6 331.0 L1650.0 334.9 L1657.8 336.4 L1660.9 335.7 L1671.0 332.6 L1676.4 334.9 L1675.7 340.3 L1680.3 345.8 L1684.2 346.6 L1688.9 344.2 M1644.6 331.0 L1646.1 333.3 L1654.7 337.2 M1671.0 332.6 L1672.6 334.9 L1670.2 340.3 L1667.9 345.8 M1680.3 345.8 L1681.1 349.7 M1684.2 346.6 L1685.0 350.4 M1705.6 288.6 L1712.2 285.8 L1713.9 278.0 L1717.8 275.8 L1723.3 278.0 L1725.6 284.7 L1731.1 290.2 L1736.7 291.9 L1734.4 299.1 M1730.0 303.6 L1727.8 306.3 M1675.6 343.6 L1677.2 345.8 L1674.4 350.2 M1676.7 345.8 L1678.3 356.3 M1685.6 345.8 L1684.4 352.4 L1688.9 356.9 L1687.8 362.4 M1681.1 360.2 L1684.4 356.9 M1533.7 275.4 L1534.4 278.9 L1539.1 279.7 L1546.9 276.6 L1548.4 273.4 L1544.6 269.9 M1548.4 273.4 L1553.1 270.3 M1548.4 280.4 L1553.1 281.2 L1560.9 277.3 L1562.4 275.8 L1560.9 270.3 M1533.3 280.4 L1534.4 283.6 L1539.1 285.9 L1543.8 285.5 L1546.9 285.9 L1548.4 280.4 L1546.9 276.6 M1548.4 280.4 L1550.0 283.6 L1547.7 287.4 L1546.9 285.9 M1562.4 275.8 L1565.6 280.4 L1570.2 283.6 L1575.7 285.9 L1573.3 291.3 M1550.0 283.6 L1554.7 282.8 L1560.9 285.9 L1558.6 292.9 M1530.6 285.5 L1536.0 284.7 L1539.1 285.9 M1529.8 287.8 L1536.0 288.2 L1539.1 287.4 L1543.8 289.0 L1547.7 287.4 M1530.9 290.2 L1536.0 291.3 L1539.1 290.6 L1543.8 289.0 M1529.8 293.7 L1534.4 293.7 L1539.1 290.6 M1543.8 289.0 L1544.6 293.7 L1547.7 295.2 L1554.7 292.1 M1544.6 293.7 L1541.4 296.0 L1542.2 299.1 L1545.3 300.7 L1546.9 304.6 L1553.9 303.8 M1534.4 297.9 L1539.1 297.6 L1541.4 296.0 M1539.1 297.6 L1541.4 301.4 L1545.3 300.7 M1541.4 304.6 L1544.6 304.6 L1546.9 304.6 M1544.6 304.6 L1544.6 308.8 M1581.9 307.7 L1584.2 308.4 L1588.9 306.9 L1590.4 304.6 M1582.7 310.0 L1588.9 311.6 L1591.2 308.4 M1581.9 313.1 L1584.2 313.9 L1588.9 311.6 M1580.3 315.4 L1583.4 314.7 L1584.2 317.8 L1578.0 322.4 L1573.3 324.0 L1570.2 322.4 M1576.4 316.2 L1575.7 319.3 L1571.8 321.7 M1584.2 317.8 L1587.3 322.4 L1590.4 327.1 L1592.0 330.2 M1578.0 322.4 L1581.1 327.1 L1588.9 330.2 L1592.0 330.2 L1595.1 334.9 M1567.9 327.9 L1570.2 325.6 L1573.3 324.0 M1566.3 330.2 L1567.9 327.9 M1495.6 304.6 L1494.4 310.0 L1493.2 314.7 M1614.4 338.3 L1615.0 334.4 L1613.3 331.1 L1612.2 325.6 L1611.7 320.0 M1615.0 332.8 L1620.0 331.1 L1622.2 328.3 L1625.6 325.6 L1628.3 322.2 L1630.0 320.0 M1581.7 358.3 L1585.6 357.2 L1591.1 353.3 L1596.1 351.7 L1597.2 353.3 M1596.1 351.7 L1601.1 350.0 L1603.3 344.4 M1570.0 327.2 L1574.4 325.6 L1581.1 330.6 L1588.3 332.8 M1585.0 322.2 L1588.9 326.1 L1588.9 329.4" fill="none" stroke="#fff" stroke-width="1.05" stroke-linejoin="round"/><path d="M1748.3 388.3 L1748.3 399.7" stroke="#fff" stroke-width="1" fill="none"/><path d="M1390.0 381.7 L1392.2 383.3 L1396.7 382.2 L1400.0 378.9 L1404.4 377.8 L1405.0 380.6 L1407.8 382.2 L1413.3 381.1 L1416.7 381.7 L1419.4 380.6 L1421.1 382.8 L1423.3 385.2 L1430.0 387.2 L1434.4 389.4 L1441.1 390.6 L1445.6 393.3 L1447.6 397.2 L1446.1 401.1 L1443.3 405.0 L1440.6 407.8 L1439.4 411.7 L1439.4 417.2 L1437.8 421.7 L1434.4 423.9 L1430.0 425.6 L1425.6 428.3 L1423.3 431.7 L1422.8 435.6 L1420.0 439.4 L1416.7 442.0 L1411.7 437.8 L1414.4 435.0 L1416.1 432.8 L1415.0 429.4 L1412.2 425.0 L1410.0 421.7 L1410.0 417.2 L1407.8 412.8 L1405.6 409.4 L1402.2 407.2 L1398.9 405.0 L1396.1 402.2 L1393.3 401.7 L1390.0 402.8 L1387.8 400.6 L1385.6 399.4 L1383.3 398.3 L1383.3 395.0 L1385.6 393.3 L1388.9 393.3 L1389.4 388.3 L1389.4 384.4Z" fill="#21703c" stroke="#fff" stroke-width="0.6"/><path d="M1523.2 273.4 L1525.1 275.4 L1529.8 274.6 L1531.3 275.8 L1531.7 280.4 L1530.6 282.8 L1528.2 285.1 L1529.8 288.2 L1528.6 291.3 L1523.6 291.3 L1521.6 289.8 L1521.6 285.9 L1519.3 283.6 L1519.7 281.2 L1521.2 278.9 L1522.4 275.8Z" fill="#2f9654" stroke="#fff" stroke-width="0.5"/><path d="M1501.0 290.6 L1503.3 290.2 L1505.7 288.6 L1511.1 285.9 L1512.7 285.5 L1514.2 287.1 L1518.9 288.6 L1520.4 290.6 L1519.7 292.9 L1517.7 295.2 L1518.9 297.6 L1518.5 299.9 L1518.9 302.2 L1516.6 301.8 L1511.9 302.6 L1511.5 304.2 L1506.4 302.6 L1505.7 300.7 L1506.8 297.6 L1504.9 293.7 L1503.3 291.7Z" fill="#2f9654" stroke="#fff" stroke-width="0.5"/><path d="M1635.6 322.2 L1640.6 321.9 L1641.1 324.4 L1642.2 325.6 L1643.3 328.3 L1644.4 331.1 L1647.8 333.3 L1652.2 335.6 L1656.7 337.8 L1658.3 338.9 L1657.8 341.1 L1658.9 343.9 L1658.3 345.6 L1655.6 347.8 L1653.3 350.6 L1650.6 353.3 L1647.8 355.6 L1644.4 357.2 L1643.3 358.9 L1644.2 361.7 L1643.3 364.4 L1642.2 367.2 L1640.8 369.4 L1639.2 369.2 L1637.5 366.1 L1636.1 362.2 L1635.0 358.9 L1633.9 355.6 L1633.1 351.1 L1632.5 347.8 L1631.1 346.1 L1630.0 345.6 L1629.7 347.5 L1628.1 347.5 L1627.2 345.6 L1628.3 343.9 L1626.1 343.1 L1626.4 342.2 L1630.3 342.5 L1628.3 341.1 L1627.2 338.3 L1627.8 336.1 L1631.1 333.9 L1633.9 331.1 L1636.7 327.8 L1638.3 325.6 L1636.1 324.4Z" fill="#21703c" stroke="#fff" stroke-width="0.5"/><path d="M1296.7 289.3 L1352.2 291.1" stroke="#fff" stroke-width="1" fill="none"/></g></svg>
<svg width="1893" height="1080" viewBox="0 0 1893 1080"><defs><linearGradient id="lg" x1="0" x2="1" y1="0" y2="0"><stop offset="0" stop-color="#dff3e5"/><stop offset="0.33" stop-color="#88cb9e"/><stop offset="0.62" stop-color="#2e9b56"/><stop offset="1" stop-color="#144a26"/></linearGradient></defs><path d="M1338.6 490.5 L1342.5 487.4 L1346.2 487.8 L1349.5 486.6 L1353.2 490.2 L1355 494 L1353.6 498 L1352.8 502 L1347 503.2 L1343.6 501 L1339.6 500.4 L1338.2 496 Z" fill="#5d8250"/><rect x="1538.2" y="519.2" width="119.8" height="11.6" fill="url(#lg)"/></svg>
<div class="t" style="top:486.00px;font-size:14px;line-height:19px;color:#3a3632;left:1363.80px;transform-origin:0 0;transform:scaleX(1.0946);">Country, Country_continent (Poly...</div>
<div class="t" style="top:515.00px;font-size:14px;line-height:19px;color:#8a8683;left:1364.20px;transform-origin:0 0;transform:scaleX(1.0777);">Total Active Projects</div>
<div class="t" style="top:517.00px;font-size:14px;line-height:19px;color:#3a3632;left:1520.70px;transform-origin:0 0;transform:scaleX(1.0276);">1</div>
<div class="t" style="top:517.00px;font-size:14px;line-height:19px;color:#3a3632;left:1666.60px;transform-origin:0 0;transform:scaleX(0.9248);">7</div>
<div class="b" style="left:1821px;top:454px;width:42.6px;height:85.6px;border-radius:21.3px;background:#1c3b42;box-shadow:2px 3px 5px rgba(0,0,0,0.35);"></div>
<svg width="1893" height="1080" viewBox="0 0 1893 1080"><circle cx="1842.3" cy="475.5" r="13.7" fill="none" stroke="#e3eaeb" stroke-width="1.7"/><g fill="#6a8388"><circle cx="1835.6" cy="503.6" r="3"/><circle cx="1843.9" cy="503.6" r="3"/><circle cx="1852.4" cy="503.6" r="3"/><circle cx="1835.6" cy="512.7" r="3"/><circle cx="1843.9" cy="512.7" r="3"/><circle cx="1852.4" cy="512.7" r="3"/><circle cx="1835.6" cy="521.8" r="3"/><circle cx="1843.9" cy="521.8" r="3"/><circle cx="1852.4" cy="521.8" r="3"/></g></svg>
<div class="t" style="left:1832.3px;top:462.5px;width:20px;text-align:center;font-family:'Liberation Serif','DejaVu Serif',serif;font-style:italic;font-weight:400;font-size:22px;line-height:26px;color:#e8eeee;-webkit-text-stroke:0.5px #e8eeee;">i</div>
<div class="t" style="top:572.00px;font-size:16.6px;line-height:22px;color:#161513;left:32.10px;transform-origin:0 0;transform:scaleX(1.0461);clip-path:inset(0 0 3.4px 0);">Submission Number, Product ID, Country, Schedule Start Year, Schedule Start Quarter, Total Revenue Forecast, ...</div>
<div class="t" style="top:607.00px;font-size:14px;line-height:19px;color:#3a3632;left:34.30px;transform-origin:0 0;transform:scaleX(1.0633);">Project Status:</div>
<div class="t" style="top:607.00px;font-size:14px;line-height:19px;color:#6b6661;left:134.60px;transform-origin:0 0;transform:scaleX(1.0429);">Proposed</div>
<div class="b" style="left:26px;top:628px;width:903px;height:460px;border:1px solid #dddcda;background:#fff;"></div>
<div class="b" style="left:27px;top:629px;width:880.5px;height:63px;background:#f5f4f2;"></div>
<div class="b" style="left:901px;top:693px;width:27px;height:390px;background:#fcfbfb;"></div>
<div class="b" style="left:122px;top:629px;width:1px;height:460px;background:#dddcda;"></div>
<div class="b" style="left:204px;top:629px;width:1px;height:460px;background:#dddcda;"></div>
<div class="b" style="left:285px;top:629px;width:1px;height:460px;background:#dddcda;"></div>
<div class="b" style="left:367px;top:629px;width:1px;height:460px;background:#dddcda;"></div>
<div class="b" style="left:449px;top:629px;width:1px;height:460px;background:#dddcda;"></div>
<div class="b" style="left:545px;top:629px;width:1px;height:460px;background:#dddcda;"></div>
<div class="b" style="left:649px;top:629px;width:1px;height:460px;background:#dddcda;"></div>
<div class="b" style="left:751px;top:629px;width:1px;height:460px;background:#dddcda;"></div>
<div class="b" style="left:831px;top:629px;width:1px;height:460px;background:#dddcda;"></div>
<div class="b" style="left:907px;top:629px;width:1px;height:63.5px;background:#dddcda;"></div>
<div class="b" style="left:27px;top:692px;width:901px;height:1px;background:#dddcda;"></div>
<div class="t" style="top:645.00px;font-size:13px;line-height:17px;color:#3a3632;left:-225.50px;width:600px;text-align:center;transform-origin:50% 0;transform:scaleX(1.0388);">Submission</div>
<div class="t" style="top:661.00px;font-size:13px;line-height:17px;color:#3a3632;left:-225.50px;width:600px;text-align:center;transform-origin:50% 0;transform:scaleX(1.0707);">Number</div>
<div class="t" style="top:645.00px;font-size:13px;line-height:17px;color:#3a3632;left:-140.20px;width:600px;text-align:center;transform-origin:50% 0;transform:scaleX(1.0781);">Product</div>
<div class="t" style="top:661.00px;font-size:13px;line-height:17px;color:#3a3632;left:-140.20px;width:600px;text-align:center;transform-origin:50% 0;transform:scaleX(0.9615);">ID</div>
<div class="t" style="top:652.00px;font-size:13px;line-height:17px;color:#3a3632;left:-55.10px;width:600px;text-align:center;transform-origin:50% 0;transform:scaleX(1.0809);">Country</div>
<div class="t" style="top:635.00px;font-size:13px;line-height:17px;color:#3a3632;left:26.60px;width:600px;text-align:center;transform-origin:50% 0;transform:scaleX(1.0183);">Schedule</div>
<div class="t" style="top:652.00px;font-size:13px;line-height:17px;color:#3a3632;left:26.60px;width:600px;text-align:center;transform-origin:50% 0;transform:scaleX(1.1110);">Start</div>
<div class="t" style="top:669.00px;font-size:13px;line-height:17px;color:#3a3632;left:26.60px;width:600px;text-align:center;transform-origin:50% 0;transform:scaleX(1.0089);">Year</div>
<div class="t" style="top:635.00px;font-size:13px;line-height:17px;color:#3a3632;left:108.30px;width:600px;text-align:center;transform-origin:50% 0;transform:scaleX(1.0183);">Schedule</div>
<div class="t" style="top:652.00px;font-size:13px;line-height:17px;color:#3a3632;left:108.30px;width:600px;text-align:center;transform-origin:50% 0;transform:scaleX(1.1110);">Start</div>
<div class="t" style="top:669.00px;font-size:13px;line-height:17px;color:#3a3632;left:108.30px;width:600px;text-align:center;transform-origin:50% 0;transform:scaleX(1.0779);">Quarter</div>
<div class="t" style="top:635.00px;font-size:13px;line-height:17px;color:#3a3632;left:197.20px;width:600px;text-align:center;transform-origin:50% 0;transform:scaleX(1.0561);">Total</div>
<div class="t" style="top:652.00px;font-size:13px;line-height:17px;color:#3a3632;left:197.20px;width:600px;text-align:center;transform-origin:50% 0;transform:scaleX(0.9993);">Revenue</div>
<div class="t" style="top:669.00px;font-size:13px;line-height:17px;color:#3a3632;left:197.20px;width:600px;text-align:center;transform-origin:50% 0;transform:scaleX(1.0283);">Forecast</div>
<div class="t" style="top:645.00px;font-size:13px;line-height:17px;color:#3a3632;left:297.30px;width:600px;text-align:center;transform-origin:50% 0;transform:scaleX(1.0842);">Budget Total</div>
<div class="t" style="top:661.00px;font-size:13px;line-height:17px;color:#3a3632;left:297.30px;width:600px;text-align:center;transform-origin:50% 0;transform:scaleX(0.9983);">Expense</div>
<div class="t" style="top:635.00px;font-size:13px;line-height:17px;color:#3a3632;left:400.40px;width:600px;text-align:center;transform-origin:50% 0;transform:scaleX(1.0925);">Market</div>
<div class="t" style="top:652.00px;font-size:13px;line-height:17px;color:#3a3632;left:400.40px;width:600px;text-align:center;transform-origin:50% 0;transform:scaleX(1.1250);">Opportunity</div>
<div class="t" style="top:669.00px;font-size:13px;line-height:17px;color:#3a3632;left:400.40px;width:600px;text-align:center;transform-origin:50% 0;transform:scaleX(0.9953);">Score</div>
<div class="t" style="top:645.00px;font-size:13px;line-height:17px;color:#3a3632;left:491.60px;width:600px;text-align:center;transform-origin:50% 0;transform:scaleX(1.0643);">Strategic</div>
<div class="t" style="top:661.00px;font-size:13px;line-height:17px;color:#3a3632;left:491.60px;width:600px;text-align:center;transform-origin:50% 0;transform:scaleX(1.0152);">Fit Score</div>
<div class="b" style="left:832px;top:629px;width:75.3px;height:63px;overflow:hidden;">
<div class="t" style="left:-252.60px;width:600px;text-align:center;top:6.00px;font-size:13px;line-height:17px;color:#3a3632;transform:scaleX(1.1135);transform-origin:50% 0;">Regulatory</div>
<div class="t" style="left:-252.60px;width:600px;text-align:center;top:23.00px;font-size:13px;line-height:17px;color:#3a3632;transform:scaleX(1.1354);transform-origin:50% 0;">Complexity</div>
<div class="t" style="left:-252.60px;width:600px;text-align:center;top:40.00px;font-size:13px;line-height:17px;color:#3a3632;transform:scaleX(0.9953);transform-origin:50% 0;">Score</div>
</div>
<svg width="1893" height="1080" viewBox="0 0 1893 1080"><path d="M188.9 664.2 h11 l-5.5 -6.3 z" fill="#3a3632"/><g fill="none" stroke="#bab4af" stroke-width="2.9"><path d="M908.2 709.8 L914 702.4 L919.8 709.8"/><path d="M908.2 1069.4 L914 1076.8 L919.8 1069.4"/></g></svg>
<div class="b" style="left:901.3px;top:719.2px;width:25.4px;height:68.2px;background:#bab4af;"></div>
<div class="t" style="top:709.00px;font-size:12.7px;line-height:17px;color:#3a3632;left:39.40px;transform-origin:0 0;transform:scaleX(1.0556);">CS00104</div>
<div class="t" style="top:709.00px;font-size:12.7px;line-height:17px;color:#3a3632;left:135.40px;transform-origin:0 0;transform:scaleX(1.0742);">FIT5004</div>
<div class="t" style="top:701.00px;font-size:12.7px;line-height:17px;color:#3a3632;left:216.60px;transform-origin:0 0;transform:scaleX(1.1033);">United</div>
<div class="t" style="top:718.00px;font-size:12.7px;line-height:17px;color:#3a3632;left:216.60px;transform-origin:0 0;transform:scaleX(1.0694);">States</div>
<div class="t" style="top:709.00px;font-size:12.7px;line-height:17px;color:#3a3632;left:298.80px;transform-origin:0 0;transform:scaleX(1.0974);">2022</div>
<div class="t" style="top:709.00px;font-size:12.7px;line-height:17px;color:#3a3632;right:1456.90px;transform-origin:100% 0;transform:scaleX(1.0800);">4</div>
<div class="t" style="top:709.00px;font-size:12.7px;line-height:17px;color:#3a3632;right:1360.90px;transform-origin:100% 0;transform:scaleX(1.1050);">$325,940</div>
<div class="t" style="top:709.00px;font-size:12.7px;line-height:17px;color:#3a3632;right:1256.30px;transform-origin:100% 0;transform:scaleX(1.1050);">$67,199.00</div>
<div class="t" style="top:709.00px;font-size:12.7px;line-height:17px;color:#3a3632;right:1154.80px;transform-origin:100% 0;transform:scaleX(1.0800);">2</div>
<div class="t" style="top:709.00px;font-size:12.7px;line-height:17px;color:#3a3632;right:1074.50px;transform-origin:100% 0;transform:scaleX(1.0800);">5</div>
<div class="b" style="left:27px;top:739px;width:874px;height:1px;background:#dddcda;"></div>
<div class="t" style="top:748.00px;font-size:12.7px;line-height:17px;color:#3a3632;left:39.40px;transform-origin:0 0;transform:scaleX(1.0747);">CS00112</div>
<div class="t" style="top:748.00px;font-size:12.7px;line-height:17px;color:#3a3632;left:135.40px;transform-origin:0 0;transform:scaleX(1.0742);">FIT5012</div>
<div class="t" style="top:748.00px;font-size:12.7px;line-height:17px;color:#3a3632;left:216.60px;transform-origin:0 0;transform:scaleX(1.0850);">India</div>
<div class="t" style="top:748.00px;font-size:12.7px;line-height:17px;color:#3a3632;left:298.80px;transform-origin:0 0;transform:scaleX(1.0974);">2022</div>
<div class="t" style="top:748.00px;font-size:12.7px;line-height:17px;color:#3a3632;right:1456.90px;transform-origin:100% 0;transform:scaleX(1.0800);">3</div>
<div class="t" style="top:748.00px;font-size:12.7px;line-height:17px;color:#3a3632;right:1360.90px;transform-origin:100% 0;transform:scaleX(1.1050);">$651,969</div>
<div class="t" style="top:748.00px;font-size:12.7px;line-height:17px;color:#3a3632;right:1256.30px;transform-origin:100% 0;transform:scaleX(1.1050);">$138,379.00</div>
<div class="t" style="top:748.00px;font-size:12.7px;line-height:17px;color:#3a3632;right:1154.80px;transform-origin:100% 0;transform:scaleX(1.0800);">3</div>
<div class="t" style="top:748.00px;font-size:12.7px;line-height:17px;color:#3a3632;right:1074.50px;transform-origin:100% 0;transform:scaleX(1.0800);">2</div>
<div class="b" style="left:27px;top:769px;width:874px;height:1px;background:#dddcda;"></div>
<div class="t" style="top:778.00px;font-size:12.7px;line-height:17px;color:#3a3632;left:39.40px;transform-origin:0 0;transform:scaleX(1.0747);">CS00119</div>
<div class="t" style="top:778.00px;font-size:12.7px;line-height:17px;color:#3a3632;left:135.40px;transform-origin:0 0;transform:scaleX(1.0742);">FIT5019</div>
<div class="t" style="top:778.00px;font-size:12.7px;line-height:17px;color:#3a3632;left:216.60px;transform-origin:0 0;transform:scaleX(1.0850);">Germany</div>
<div class="t" style="top:778.00px;font-size:12.7px;line-height:17px;color:#3a3632;left:298.80px;transform-origin:0 0;transform:scaleX(1.0974);">2022</div>
<div class="t" style="top:778.00px;font-size:12.7px;line-height:17px;color:#3a3632;right:1456.90px;transform-origin:100% 0;transform:scaleX(1.0800);">4</div>
<div class="t" style="top:778.00px;font-size:12.7px;line-height:17px;color:#3a3632;left:461.80px;transform-origin:0 0;transform:scaleX(1.0850);">$1,289,5...</div>
<div class="t" style="top:778.00px;font-size:12.7px;line-height:17px;color:#3a3632;right:1256.30px;transform-origin:100% 0;transform:scaleX(1.1050);">$240,474.00</div>
<div class="t" style="top:778.00px;font-size:12.7px;line-height:17px;color:#3a3632;right:1154.80px;transform-origin:100% 0;transform:scaleX(1.0800);">3</div>
<div class="t" style="top:778.00px;font-size:12.7px;line-height:17px;color:#3a3632;right:1074.50px;transform-origin:100% 0;transform:scaleX(1.0800);">3</div>
<div class="b" style="left:27px;top:799px;width:874px;height:1px;background:#dddcda;"></div>
<div class="t" style="top:808.00px;font-size:12.7px;line-height:17px;color:#3a3632;left:39.40px;transform-origin:0 0;transform:scaleX(1.0556);">CS00124</div>
<div class="t" style="top:808.00px;font-size:12.7px;line-height:17px;color:#3a3632;left:135.40px;transform-origin:0 0;transform:scaleX(1.0742);">FIT5024</div>
<div class="t" style="top:808.00px;font-size:12.7px;line-height:17px;color:#3a3632;left:216.60px;transform-origin:0 0;transform:scaleX(1.0850);">Brazil</div>
<div class="t" style="top:808.00px;font-size:12.7px;line-height:17px;color:#3a3632;left:298.80px;transform-origin:0 0;transform:scaleX(1.0974);">2022</div>
<div class="t" style="top:808.00px;font-size:12.7px;line-height:17px;color:#3a3632;right:1456.90px;transform-origin:100% 0;transform:scaleX(1.0800);">3</div>
<div class="t" style="top:808.00px;font-size:12.7px;line-height:17px;color:#3a3632;right:1360.90px;transform-origin:100% 0;transform:scaleX(1.1050);">$266,405</div>
<div class="t" style="top:808.00px;font-size:12.7px;line-height:17px;color:#3a3632;right:1256.30px;transform-origin:100% 0;transform:scaleX(1.1050);">$44,539.00</div>
<div class="t" style="top:808.00px;font-size:12.7px;line-height:17px;color:#3a3632;right:1154.80px;transform-origin:100% 0;transform:scaleX(1.0800);">2</div>
<div class="t" style="top:808.00px;font-size:12.7px;line-height:17px;color:#3a3632;right:1074.50px;transform-origin:100% 0;transform:scaleX(1.0800);">1</div>
<div class="b" style="left:27px;top:829px;width:874px;height:1px;background:#dddcda;"></div>
<div class="t" style="top:838.00px;font-size:12.7px;line-height:17px;color:#3a3632;left:39.40px;transform-origin:0 0;transform:scaleX(1.0556);">CS00130</div>
<div class="t" style="top:838.00px;font-size:12.7px;line-height:17px;color:#3a3632;left:135.40px;transform-origin:0 0;transform:scaleX(1.0742);">FIT5030</div>
<div class="t" style="top:838.00px;font-size:12.7px;line-height:17px;color:#3a3632;left:216.60px;transform-origin:0 0;transform:scaleX(1.0850);">France</div>
<div class="t" style="top:838.00px;font-size:12.7px;line-height:17px;color:#3a3632;left:298.80px;transform-origin:0 0;transform:scaleX(1.0974);">2022</div>
<div class="t" style="top:838.00px;font-size:12.7px;line-height:17px;color:#3a3632;right:1456.90px;transform-origin:100% 0;transform:scaleX(1.0800);">4</div>
<div class="t" style="top:838.00px;font-size:12.7px;line-height:17px;color:#3a3632;right:1360.90px;transform-origin:100% 0;transform:scaleX(1.1050);">$886,266</div>
<div class="t" style="top:838.00px;font-size:12.7px;line-height:17px;color:#3a3632;right:1256.30px;transform-origin:100% 0;transform:scaleX(1.1050);">$172,119.00</div>
<div class="t" style="top:838.00px;font-size:12.7px;line-height:17px;color:#3a3632;right:1154.80px;transform-origin:100% 0;transform:scaleX(1.0800);">2</div>
<div class="t" style="top:838.00px;font-size:12.7px;line-height:17px;color:#3a3632;right:1074.50px;transform-origin:100% 0;transform:scaleX(1.0800);">3</div>
<div class="b" style="left:27px;top:859px;width:874px;height:1px;background:#dddcda;"></div>
<div class="t" style="top:868.00px;font-size:12.7px;line-height:17px;color:#3a3632;left:39.40px;transform-origin:0 0;transform:scaleX(1.0556);">CS00131</div>
<div class="t" style="top:868.00px;font-size:12.7px;line-height:17px;color:#3a3632;left:135.40px;transform-origin:0 0;transform:scaleX(1.0742);">FIT5031</div>
<div class="t" style="top:868.00px;font-size:12.7px;line-height:17px;color:#3a3632;left:216.60px;transform-origin:0 0;transform:scaleX(1.0850);">India</div>
<div class="t" style="top:868.00px;font-size:12.7px;line-height:17px;color:#3a3632;left:298.80px;transform-origin:0 0;transform:scaleX(1.0974);">2022</div>
<div class="t" style="top:868.00px;font-size:12.7px;line-height:17px;color:#3a3632;right:1456.90px;transform-origin:100% 0;transform:scaleX(1.0800);">3</div>
<div class="t" style="top:868.00px;font-size:12.7px;line-height:17px;color:#3a3632;left:461.80px;transform-origin:0 0;transform:scaleX(1.0850);">$1,663,4...</div>
<div class="t" style="top:868.00px;font-size:12.7px;line-height:17px;color:#3a3632;right:1256.30px;transform-origin:100% 0;transform:scaleX(1.1050);">$266,026.00</div>
<div class="t" style="top:868.00px;font-size:12.7px;line-height:17px;color:#3a3632;right:1154.80px;transform-origin:100% 0;transform:scaleX(1.0800);">2</div>
<div class="t" style="top:868.00px;font-size:12.7px;line-height:17px;color:#3a3632;right:1074.50px;transform-origin:100% 0;transform:scaleX(1.0800);">4</div>
<div class="b" style="left:27px;top:889px;width:874px;height:1px;background:#dddcda;"></div>
<div class="t" style="top:906.00px;font-size:12.7px;line-height:17px;color:#3a3632;left:39.40px;transform-origin:0 0;transform:scaleX(1.0556);">CS00134</div>
<div class="t" style="top:906.00px;font-size:12.7px;line-height:17px;color:#3a3632;left:135.40px;transform-origin:0 0;transform:scaleX(1.0742);">FIT5034</div>
<div class="t" style="top:898.00px;font-size:12.7px;line-height:17px;color:#3a3632;left:216.60px;transform-origin:0 0;transform:scaleX(1.1033);">United</div>
<div class="t" style="top:915.00px;font-size:12.7px;line-height:17px;color:#3a3632;left:216.60px;transform-origin:0 0;transform:scaleX(1.0694);">States</div>
<div class="t" style="top:906.00px;font-size:12.7px;line-height:17px;color:#3a3632;left:298.80px;transform-origin:0 0;transform:scaleX(1.0974);">2022</div>
<div class="t" style="top:906.00px;font-size:12.7px;line-height:17px;color:#3a3632;right:1456.90px;transform-origin:100% 0;transform:scaleX(1.0800);">3</div>
<div class="t" style="top:906.00px;font-size:12.7px;line-height:17px;color:#3a3632;right:1360.90px;transform-origin:100% 0;transform:scaleX(1.1050);">$120,834</div>
<div class="t" style="top:906.00px;font-size:12.7px;line-height:17px;color:#3a3632;right:1256.30px;transform-origin:100% 0;transform:scaleX(1.1050);">$34,843.00</div>
<div class="t" style="top:906.00px;font-size:12.7px;line-height:17px;color:#3a3632;right:1154.80px;transform-origin:100% 0;transform:scaleX(1.0800);">3</div>
<div class="t" style="top:906.00px;font-size:12.7px;line-height:17px;color:#3a3632;right:1074.50px;transform-origin:100% 0;transform:scaleX(1.0800);">2</div>
<div class="b" style="left:27px;top:936px;width:874px;height:1px;background:#dddcda;"></div>
<div class="t" style="top:945.00px;font-size:12.7px;line-height:17px;color:#3a3632;left:39.40px;transform-origin:0 0;transform:scaleX(1.0556);">CS00138</div>
<div class="t" style="top:945.00px;font-size:12.7px;line-height:17px;color:#3a3632;left:135.40px;transform-origin:0 0;transform:scaleX(1.0742);">FIT5038</div>
<div class="t" style="top:945.00px;font-size:12.7px;line-height:17px;color:#3a3632;left:216.60px;transform-origin:0 0;transform:scaleX(1.0850);">France</div>
<div class="t" style="top:945.00px;font-size:12.7px;line-height:17px;color:#3a3632;left:298.80px;transform-origin:0 0;transform:scaleX(1.0974);">2022</div>
<div class="t" style="top:945.00px;font-size:12.7px;line-height:17px;color:#3a3632;right:1456.90px;transform-origin:100% 0;transform:scaleX(1.0800);">4</div>
<div class="t" style="top:945.00px;font-size:12.7px;line-height:17px;color:#3a3632;right:1360.90px;transform-origin:100% 0;transform:scaleX(1.1050);">$786,116</div>
<div class="t" style="top:945.00px;font-size:12.7px;line-height:17px;color:#3a3632;right:1256.30px;transform-origin:100% 0;transform:scaleX(1.1050);">$159,646.00</div>
<div class="t" style="top:945.00px;font-size:12.7px;line-height:17px;color:#3a3632;right:1154.80px;transform-origin:100% 0;transform:scaleX(1.0800);">4</div>
<div class="t" style="top:945.00px;font-size:12.7px;line-height:17px;color:#3a3632;right:1074.50px;transform-origin:100% 0;transform:scaleX(1.0800);">1</div>
<div class="b" style="left:27px;top:966px;width:874px;height:1px;background:#dddcda;"></div>
<div class="t" style="top:975.00px;font-size:12.7px;line-height:17px;color:#3a3632;left:39.40px;transform-origin:0 0;transform:scaleX(1.0556);">CS00139</div>
<div class="t" style="top:975.00px;font-size:12.7px;line-height:17px;color:#3a3632;left:135.40px;transform-origin:0 0;transform:scaleX(1.0742);">FIT5039</div>
<div class="t" style="top:975.00px;font-size:12.7px;line-height:17px;color:#3a3632;left:216.60px;transform-origin:0 0;transform:scaleX(1.0850);">Germany</div>
<div class="t" style="top:975.00px;font-size:12.7px;line-height:17px;color:#3a3632;left:298.80px;transform-origin:0 0;transform:scaleX(1.0974);">2022</div>
<div class="t" style="top:975.00px;font-size:12.7px;line-height:17px;color:#3a3632;right:1456.90px;transform-origin:100% 0;transform:scaleX(1.0800);">3</div>
<div class="t" style="top:975.00px;font-size:12.7px;line-height:17px;color:#3a3632;right:1360.90px;transform-origin:100% 0;transform:scaleX(1.1050);">$999,570</div>
<div class="t" style="top:975.00px;font-size:12.7px;line-height:17px;color:#3a3632;right:1256.30px;transform-origin:100% 0;transform:scaleX(1.1050);">$224,332.00</div>
<div class="t" style="top:975.00px;font-size:12.7px;line-height:17px;color:#3a3632;right:1154.80px;transform-origin:100% 0;transform:scaleX(1.0800);">5</div>
<div class="t" style="top:975.00px;font-size:12.7px;line-height:17px;color:#3a3632;right:1074.50px;transform-origin:100% 0;transform:scaleX(1.0800);">1</div>
<div class="b" style="left:27px;top:996px;width:874px;height:1px;background:#dddcda;"></div>
<div class="t" style="top:1005.00px;font-size:12.7px;line-height:17px;color:#3a3632;left:39.40px;transform-origin:0 0;transform:scaleX(1.0556);">CS00144</div>
<div class="t" style="top:1005.00px;font-size:12.7px;line-height:17px;color:#3a3632;left:135.40px;transform-origin:0 0;transform:scaleX(1.0742);">FIT5044</div>
<div class="t" style="top:1005.00px;font-size:12.7px;line-height:17px;color:#3a3632;left:216.60px;transform-origin:0 0;transform:scaleX(1.0850);">Germany</div>
<div class="t" style="top:1005.00px;font-size:12.7px;line-height:17px;color:#3a3632;left:298.80px;transform-origin:0 0;transform:scaleX(1.0974);">2022</div>
<div class="t" style="top:1005.00px;font-size:12.7px;line-height:17px;color:#3a3632;right:1456.90px;transform-origin:100% 0;transform:scaleX(1.0800);">3</div>
<div class="t" style="top:1005.00px;font-size:12.7px;line-height:17px;color:#3a3632;left:461.80px;transform-origin:0 0;transform:scaleX(1.0850);">$2,895,1...</div>
<div class="t" style="top:1005.00px;font-size:12.7px;line-height:17px;color:#3a3632;right:1256.30px;transform-origin:100% 0;transform:scaleX(1.1050);">$292,962.00</div>
<div class="t" style="top:1005.00px;font-size:12.7px;line-height:17px;color:#3a3632;right:1154.80px;transform-origin:100% 0;transform:scaleX(1.0800);">2</div>
<div class="t" style="top:1005.00px;font-size:12.7px;line-height:17px;color:#3a3632;right:1074.50px;transform-origin:100% 0;transform:scaleX(1.0800);">3</div>
<div class="b" style="left:27px;top:1026px;width:874px;height:1px;background:#dddcda;"></div>
<div class="t" style="top:1035.00px;font-size:12.7px;line-height:17px;color:#3a3632;left:39.40px;transform-origin:0 0;transform:scaleX(1.0556);">CS00145</div>
<div class="t" style="top:1035.00px;font-size:12.7px;line-height:17px;color:#3a3632;left:135.40px;transform-origin:0 0;transform:scaleX(1.0742);">FIT5045</div>
<div class="t" style="top:1035.00px;font-size:12.7px;line-height:17px;color:#3a3632;left:216.60px;transform-origin:0 0;transform:scaleX(1.0850);">India</div>
<div class="t" style="top:1035.00px;font-size:12.7px;line-height:17px;color:#3a3632;left:298.80px;transform-origin:0 0;transform:scaleX(1.0974);">2022</div>
<div class="t" style="top:1035.00px;font-size:12.7px;line-height:17px;color:#3a3632;right:1456.90px;transform-origin:100% 0;transform:scaleX(1.0800);">4</div>
<div class="t" style="top:1035.00px;font-size:12.7px;line-height:17px;color:#3a3632;right:1360.90px;transform-origin:100% 0;transform:scaleX(1.1050);">$339,212</div>
<div class="t" style="top:1035.00px;font-size:12.7px;line-height:17px;color:#3a3632;right:1256.30px;transform-origin:100% 0;transform:scaleX(1.1050);">$134,486.00</div>
<div class="t" style="top:1035.00px;font-size:12.7px;line-height:17px;color:#3a3632;right:1154.80px;transform-origin:100% 0;transform:scaleX(1.0800);">1</div>
<div class="t" style="top:1035.00px;font-size:12.7px;line-height:17px;color:#3a3632;right:1074.50px;transform-origin:100% 0;transform:scaleX(1.0800);">3</div>
<div class="b" style="left:27px;top:1056px;width:874px;height:1px;background:#dddcda;"></div>
<div class="t" style="top:1073.00px;font-size:12.7px;line-height:17px;color:#3a3632;left:39.40px;transform-origin:0 0;transform:scaleX(1.0556);">CS00153</div>
<div class="t" style="top:1073.00px;font-size:12.7px;line-height:17px;color:#3a3632;left:135.40px;transform-origin:0 0;transform:scaleX(1.0742);">FIT5053</div>
<div class="t" style="top:1065.00px;font-size:12.7px;line-height:17px;color:#3a3632;left:216.60px;transform-origin:0 0;transform:scaleX(1.1033);">United</div>
<div class="t" style="top:1082.00px;font-size:12.7px;line-height:17px;color:#3a3632;left:216.60px;transform-origin:0 0;transform:scaleX(1.0694);">States</div>
<div class="t" style="top:1073.00px;font-size:12.7px;line-height:17px;color:#3a3632;left:298.80px;transform-origin:0 0;transform:scaleX(1.0974);">2022</div>
<div class="t" style="top:1073.00px;font-size:12.7px;line-height:17px;color:#3a3632;right:1456.90px;transform-origin:100% 0;transform:scaleX(1.0800);">4</div>
<div class="t" style="top:1073.00px;font-size:12.7px;line-height:17px;color:#3a3632;right:1360.90px;transform-origin:100% 0;transform:scaleX(1.1050);">$111,258</div>
<div class="t" style="top:1073.00px;font-size:12.7px;line-height:17px;color:#3a3632;right:1256.30px;transform-origin:100% 0;transform:scaleX(1.1050);">$25,474.00</div>
<div class="t" style="top:1073.00px;font-size:12.7px;line-height:17px;color:#3a3632;right:1154.80px;transform-origin:100% 0;transform:scaleX(1.0800);">5</div>
<div class="t" style="top:1073.00px;font-size:12.7px;line-height:17px;color:#3a3632;right:1074.50px;transform-origin:100% 0;transform:scaleX(1.0800);">1</div>
<div class="b" style="left:27px;top:1103px;width:874px;height:1px;background:#dddcda;"></div>
<div class="b" style="left:948px;top:558px;width:916px;height:540px;border:1px solid #dcdcdc;background:#fff;"></div>
<div class="t" style="top:572.00px;font-size:16.6px;line-height:22px;color:#161513;left:960.70px;transform-origin:0 0;transform:scaleX(1.0363);clip-path:inset(0 0 3.4px 0);">Schedule Launch Date, Product ID, Submission Number, Schedule Start Year</div>
<div class="t" style="top:607.00px;font-size:14px;line-height:19px;color:#3a3632;left:962.40px;transform-origin:0 0;transform:scaleX(1.0633);">Project Status:</div>
<div class="t" style="top:607.00px;font-size:14px;line-height:19px;color:#6b6661;left:1062.70px;transform-origin:0 0;transform:scaleX(1.0429);">Proposed</div>
<div class="b" style="left:955px;top:628px;width:796px;height:470px;border:1px solid #e2e2e2;background:#fff;"></div>
<div class="b" style="left:956px;top:629px;width:29.5px;height:460px;background:#f3f2f0;"></div>
<div class="b" style="left:1010px;top:630px;width:720px;height:437.5px;background:#f9f9f9;border:1px solid #e9e9e9;border-bottom:none;"></div>
<div class="t" style="left:956px;top:672.5px;width:30px;height:30px;font-size:13px;line-height:30px;color:#3a3632;transform:rotate(-90deg) scaleX(1.07);transform-origin:0 0;">2022</div>
<div class="b" style="left:1010px;top:1067px;width:720px;height:20px;background:#f3f2f0;border-top:1px solid #e0e0e0;"></div>
<div class="b" style="left:1029px;top:1067px;width:1px;height:20px;background:#d9d9d9;"></div>
<div class="b" style="left:1113px;top:1067px;width:1px;height:20px;background:#d9d9d9;"></div>
<div class="b" style="left:1197px;top:1067px;width:1px;height:20px;background:#d9d9d9;"></div>
<div class="b" style="left:1282px;top:1067px;width:1px;height:20px;background:#d9d9d9;"></div>
<div class="b" style="left:1366px;top:1067px;width:1px;height:20px;background:#d9d9d9;"></div>
<div class="b" style="left:1451px;top:1067px;width:1px;height:20px;background:#d9d9d9;"></div>
<div class="b" style="left:1535px;top:1067px;width:1px;height:20px;background:#d9d9d9;"></div>
<div class="b" style="left:1620px;top:1067px;width:1px;height:20px;background:#d9d9d9;"></div>
<div class="b" style="left:1704px;top:1067px;width:1px;height:20px;background:#d9d9d9;"></div>
<div class="t" style="top:1073.00px;font-size:13px;line-height:17px;color:#4a4a4a;left:771.25px;width:600px;text-align:center;transform-origin:50% 0;transform:scaleX(1.0700);">9/10</div>
<div class="t" style="top:1073.00px;font-size:13px;line-height:17px;color:#4a4a4a;left:855.70px;width:600px;text-align:center;transform-origin:50% 0;transform:scaleX(1.0700);">9/17</div>
<div class="t" style="top:1073.00px;font-size:13px;line-height:17px;color:#4a4a4a;left:940.15px;width:600px;text-align:center;transform-origin:50% 0;transform:scaleX(1.0700);">9/24</div>
<div class="t" style="top:1073.00px;font-size:13px;line-height:17px;color:#4a4a4a;left:1024.60px;width:600px;text-align:center;transform-origin:50% 0;transform:scaleX(1.0700);">10/01</div>
<div class="t" style="top:1073.00px;font-size:13px;line-height:17px;color:#4a4a4a;left:1109.05px;width:600px;text-align:center;transform-origin:50% 0;transform:scaleX(1.0700);">10/08</div>
<div class="t" style="top:1073.00px;font-size:13px;line-height:17px;color:#4a4a4a;left:1193.50px;width:600px;text-align:center;transform-origin:50% 0;transform:scaleX(1.0700);">10/15</div>
<div class="t" style="top:1073.00px;font-size:13px;line-height:17px;color:#4a4a4a;left:1277.95px;width:600px;text-align:center;transform-origin:50% 0;transform:scaleX(1.0700);">10/22</div>
<div class="t" style="top:1073.00px;font-size:13px;line-height:17px;color:#4a4a4a;left:1362.40px;width:600px;text-align:center;transform-origin:50% 0;transform:scaleX(1.0700);">10/29</div>
<div class="b" style="left:1737px;top:631px;width:4px;height:436px;background:#ececec;"></div>
<div class="b" style="left:1737.2px;top:810.5px;width:3.8px;height:256px;background:#8c8c8c;"></div>
<svg width="1893" height="1080" viewBox="0 0 1893 1080" fill="none"><g stroke="#b9b9b9" stroke-width="1" stroke-dasharray="3.5 3.5"><path d="M1282.5 634.5 V1066"/><path d="M1657 634.5 V1066"/></g><defs><clipPath id="plot"><rect x="1010" y="630" width="719.4" height="437"/></clipPath></defs><g clip-path="url(#plot)"><path d="M1439.6 903.9 V1067" stroke="#a78bd6" stroke-width="1.2"/><path d="M1415.6 851.6 H1636.7 V897.3 H1446.2 L1439.6 903.9 L1433.0 897.3 H1415.6 Z" fill="#fff" stroke="#a78bd6" stroke-width="1.1"/><path d="M1270.4 967.9 V1067" stroke="#8a4728" stroke-width="1.2"/><path d="M1246.2 915.6 H1467.8 V961.3 H1277.0 L1270.4 967.9 L1263.8 961.3 H1246.2 Z" fill="#fff" stroke="#8a4728" stroke-width="1.1"/><path d="M1584.4 967.9 V1067" stroke="#582f6e" stroke-width="1.2"/><path d="M1560.4 915.6 H1782.0 V961.3 H1591.0 L1584.4 967.9 L1577.8 961.3 H1560.4 Z" fill="#fff" stroke="#582f6e" stroke-width="1.1"/><path d="M1222.2 1031.6 V1067" stroke="#c98a9d" stroke-width="1.2"/><path d="M1198.2 979.3 H1419.3 V1025.0 H1228.8 L1222.2 1031.6 L1215.6 1025.0 H1198.2 Z" fill="#fff" stroke="#c98a9d" stroke-width="1.1"/><path d="M1524.4 1031.6 V1067" stroke="#f9c36f" stroke-width="1.2"/><path d="M1500.0 979.3 H1721.1 V1025.0 H1531.0 L1524.4 1031.6 L1517.8 1025.0 H1500.0 Z" fill="#fff" stroke="#f9c36f" stroke-width="1.1"/></g></svg>
<div class="b" style="left:0;top:0;width:1729.2px;height:1080px;overflow:hidden;">
<div class="t" style="top:860.00px;font-size:12.5px;line-height:17px;color:#4a4745;font-weight:700;left:1422.30px;transform-origin:0 0;transform:scaleX(1.0706);">CS00298</div>
<div class="t" style="top:877.00px;font-size:12.5px;line-height:17px;color:#4a4745;left:1422.30px;transform-origin:0 0;transform:scaleX(1.1388);">10/14/2017 Product ID : FIT5198</div>
<div class="t" style="top:924.00px;font-size:12.5px;line-height:17px;color:#4a4745;font-weight:700;left:1252.90px;transform-origin:0 0;transform:scaleX(1.0706);">CS00310</div>
<div class="t" style="top:940.00px;font-size:12.5px;line-height:17px;color:#4a4745;left:1252.90px;transform-origin:0 0;transform:scaleX(1.1388);">09/30/2017 Product ID : FIT5210</div>
<div class="t" style="top:924.00px;font-size:12.5px;line-height:17px;color:#4a4745;font-weight:700;left:1567.10px;transform-origin:0 0;transform:scaleX(1.0706);">CS00313</div>
<div class="t" style="top:940.00px;font-size:12.5px;line-height:17px;color:#4a4745;left:1567.10px;transform-origin:0 0;transform:scaleX(1.1388);">10/26/2017 Product ID : FIT5213</div>
<div class="t" style="top:987.00px;font-size:12.5px;line-height:17px;color:#4a4745;font-weight:700;left:1204.90px;transform-origin:0 0;transform:scaleX(1.0706);">CS00253</div>
<div class="t" style="top:1004.00px;font-size:12.5px;line-height:17px;color:#4a4745;left:1204.90px;transform-origin:0 0;transform:scaleX(1.1388);">09/26/2017 Product ID : FIT5153</div>
<div class="t" style="top:987.00px;font-size:12.5px;line-height:17px;color:#4a4745;font-weight:700;left:1506.70px;transform-origin:0 0;transform:scaleX(1.0706);">CS00134</div>
<div class="t" style="top:1004.00px;font-size:12.5px;line-height:17px;color:#4a4745;left:1506.70px;transform-origin:0 0;transform:scaleX(1.1388);">10/21/2017 Product ID : FIT5034</div>
<div class="t" style="top:1050.00px;font-size:12.5px;line-height:17px;color:#3a3632;font-weight:700;left:1288.90px;transform-origin:0 0;transform:scaleX(1.0747);">October</div>
<div class="t" style="top:1050.00px;font-size:12.5px;line-height:17px;color:#3a3632;font-weight:700;left:1663.30px;transform-origin:0 0;transform:scaleX(1.1042);">November</div>
</div>
<div class="t" style="top:643.00px;font-size:14px;line-height:19px;color:#8a8683;left:1772.90px;transform-origin:0 0;transform:scaleX(1.0600);">Product ID</div>
<div class="b" style="left:1773.1px;top:675.1px;width:11.9px;height:11.9px;background:#b9758a;"></div>
<div class="t" style="top:673.00px;font-size:14px;line-height:19px;color:#3a3632;left:1793.50px;transform-origin:0 0;transform:scaleX(1.0531);">FIT5153</div>
<div class="b" style="left:1773.1px;top:699.1px;width:11.9px;height:11.9px;background:#82401f;"></div>
<div class="t" style="top:697.00px;font-size:14px;line-height:19px;color:#3a3632;left:1793.50px;transform-origin:0 0;transform:scaleX(1.0531);">FIT5210</div>
<div class="b" style="left:1773.1px;top:723.1px;width:11.9px;height:11.9px;background:#a07fd0;"></div>
<div class="t" style="top:721.00px;font-size:14px;line-height:19px;color:#3a3632;left:1793.50px;transform-origin:0 0;transform:scaleX(1.0531);">FIT5198</div>
<div class="b" style="left:1773.1px;top:747.1px;width:11.9px;height:11.9px;background:#f9c068;"></div>
<div class="t" style="top:745.00px;font-size:14px;line-height:19px;color:#3a3632;left:1793.50px;transform-origin:0 0;transform:scaleX(1.0531);">FIT5034</div>
<div class="b" style="left:1773.1px;top:771.1px;width:11.9px;height:11.9px;background:#582f6e;"></div>
<div class="t" style="top:769.00px;font-size:14px;line-height:19px;color:#3a3632;left:1793.50px;transform-origin:0 0;transform:scaleX(1.0531);">FIT5213</div>
<div class="b" style="left:1773.1px;top:795.1px;width:11.9px;height:11.9px;background:#5fa2ba;"></div>
<div class="t" style="top:793.00px;font-size:14px;line-height:19px;color:#3a3632;left:1793.50px;transform-origin:0 0;transform:scaleX(1.0531);">FIT5074</div>
<div class="b" style="left:1773.1px;top:819.1px;width:11.9px;height:11.9px;background:#317e49;"></div>
<div class="t" style="top:817.00px;font-size:14px;line-height:19px;color:#3a3632;left:1793.50px;transform-origin:0 0;transform:scaleX(1.0531);">FIT5152</div>
<div class="b" style="left:1773.1px;top:843.1px;width:11.9px;height:11.9px;background:#245e66;"></div>
<div class="t" style="top:841.00px;font-size:14px;line-height:19px;color:#3a3632;left:1793.50px;transform-origin:0 0;transform:scaleX(1.0531);">FIT5163</div>
<div class="b" style="left:1773.1px;top:867.1px;width:11.9px;height:11.9px;background:#e0810f;"></div>
<div class="t" style="top:865.00px;font-size:14px;line-height:19px;color:#3a3632;left:1793.50px;transform-origin:0 0;transform:scaleX(1.0531);">FIT5024</div>
<div class="b" style="left:1773.1px;top:891.1px;width:11.9px;height:11.9px;background:#5db7b1;"></div>
<div class="t" style="top:889.00px;font-size:14px;line-height:19px;color:#3a3632;left:1793.50px;transform-origin:0 0;transform:scaleX(1.0531);">FIT5218</div>
<div class="b" style="left:1773.1px;top:915.1px;width:11.9px;height:11.9px;background:#4f3f38;"></div>
<div class="t" style="top:913.00px;font-size:14px;line-height:19px;color:#3a3632;left:1793.50px;transform-origin:0 0;transform:scaleX(1.0531);">FIT5060</div>
<div class="b" style="left:1773.1px;top:939.1px;width:11.9px;height:11.9px;background:#a1cb8a;"></div>
<div class="t" style="top:937.00px;font-size:14px;line-height:19px;color:#3a3632;left:1793.50px;transform-origin:0 0;transform:scaleX(1.0745);">FIT5118</div>
<div class="b" style="left:1773.1px;top:963.1px;width:11.9px;height:11.9px;background:#b9758a;"></div>
<div class="t" style="top:961.00px;font-size:14px;line-height:19px;color:#3a3632;left:1793.50px;transform-origin:0 0;transform:scaleX(1.0531);">FIT5241</div>
<div class="b" style="left:1773.1px;top:987.1px;width:11.9px;height:11.9px;background:#82401f;"></div>
<div class="t" style="top:985.00px;font-size:14px;line-height:19px;color:#3a3632;left:1793.50px;transform-origin:0 0;transform:scaleX(1.0531);">FIT5196</div>
<div class="b" style="left:1773.1px;top:1011.1px;width:11.9px;height:11.9px;background:#a07fd0;"></div>
<div class="b" style="left:1773.1px;top:1035.1px;width:11.9px;height:11.9px;background:#f9c068;"></div>
<div class="b" style="left:1773.1px;top:1059.1px;width:11.9px;height:11.9px;background:#582f6e;"></div>
<div class="b" style="left:1765px;top:1060px;width:97px;height:20px;background:linear-gradient(rgba(255,255,255,0),rgba(255,255,255,0.55));"></div>
<div class="b" style="left:1793.3px;top:1003px;width:76.6px;height:80px;background:#c0533d;"></div>
<svg width="1893" height="1080" viewBox="0 0 1893 1080"><path d="M1808.8 1021.3 H1854 a4 4 0 0 1 4 4 V1050.8 a4 4 0 0 1 -4 4 H1818.5 L1809 1062.4 a1.6 1.6 0 0 1 -2.6 -1.3 L1804.8 1060 V1025.3 a4 4 0 0 1 4 -4 Z" fill="#fff"/><g fill="#c0533d"><circle cx="1816.9" cy="1036.6" r="4.9"/><circle cx="1831.4" cy="1036.6" r="4.9"/><circle cx="1845.7" cy="1036.6" r="4.9"/></g></svg>
</div></body></html>
